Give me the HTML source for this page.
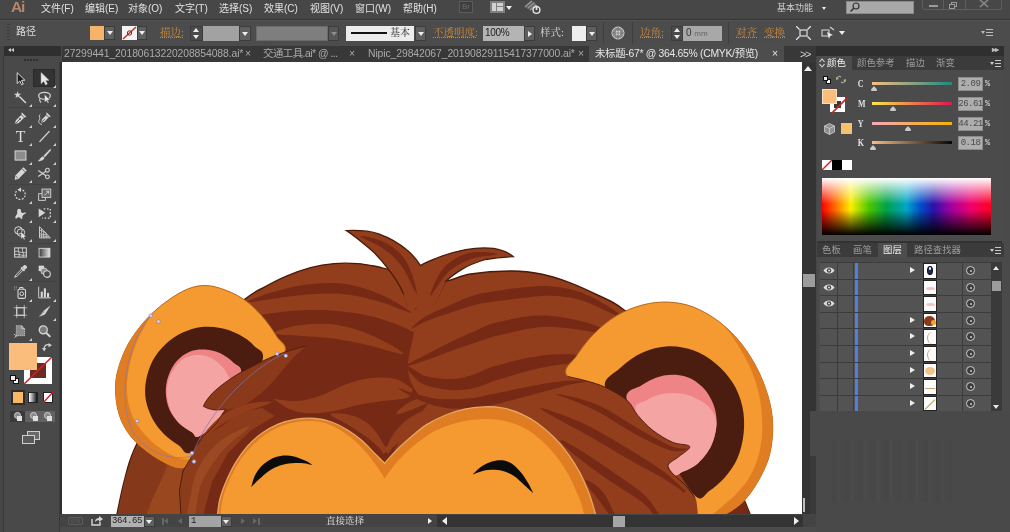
<!DOCTYPE html>
<html lang="zh-CN">
<head>
<meta charset="utf-8">
<title>Adobe Illustrator</title>
<style>
*{box-sizing:border-box;margin:0;padding:0}
html,body{width:1010px;height:532px;overflow:hidden;background:#464646}
body{font-family:"Liberation Sans","Noto Sans CJK SC",sans-serif;font-size:11px;color:#d8d8d8;position:relative}
.abs{position:absolute}
#app{will-change:transform;position:absolute;left:0;top:0;width:1010px;height:532px;overflow:hidden;background:#464646}
/* menu bar */
#menubar{left:0;top:0;width:1010px;height:20px;background:#474747;border-bottom:1px solid #333}
#menubar .mi{position:absolute;top:0;height:18px;line-height:17px;font-size:10px;color:#e2e2e2;white-space:nowrap;letter-spacing:0}
#ai{position:absolute;left:11px;top:-2px;font-size:15.5px;line-height:18px;color:#b8866a;font-weight:700;letter-spacing:-1.2px}
/* control bar */
#ctrl{left:0;top:20px;width:1010px;height:26px;background:#4c4c4c;box-shadow:inset 0 1px 0 #555}
#ctrl .t{position:absolute;white-space:nowrap;font-size:10.5px;line-height:14px;color:#dcdcdc}
#ctrl .o{color:#d08b35;text-decoration:underline;text-decoration-style:dotted;text-underline-offset:1px}
.dd{position:absolute;background:#5f5f5f;border:1px solid #3c3c3c}
.tri-d{position:absolute;width:0;height:0;border-left:3px solid transparent;border-right:3px solid transparent;border-top:4px solid #eee}
.tri-u{position:absolute;width:0;height:0;border-left:3px solid transparent;border-right:3px solid transparent;border-bottom:4px solid #eee}
.tri-r{position:absolute;width:0;height:0;border-top:3px solid transparent;border-bottom:3px solid transparent;border-left:4px solid #eee}
.tri-l{position:absolute;width:0;height:0;border-top:3px solid transparent;border-bottom:3px solid transparent;border-right:4px solid #eee}
/* tab bar */
#tabs{left:60px;top:46px;width:756px;height:16px;background:#383838}
#tabs .tab{position:absolute;top:0;height:16px;line-height:16px;font-size:10.4px;color:#aaaaaa;white-space:nowrap;letter-spacing:-0.1px}
#tabs .act{background:#4d4d4d;color:#e6e6e6}
/* canvas */
#canvas{left:62px;top:62px;width:740px;height:452px;background:#fff;overflow:hidden}
/* toolbox */
#tool{left:0;top:46px;width:62px;height:486px;background:#494949}
/* right */
#right{left:803px;top:46px;width:207px;height:486px;background:#464646}
.pt{font-size:9.4px;line-height:14px;color:#9c9c9c;white-space:nowrap}
/* status */
#status{left:60px;top:514px;width:756px;height:18px;background:#444}
</style>
</head>
<body>
<div id="app">

<!-- MENUBAR -->
<div id="menubar" class="abs">
  <div id="ai">Ai</div>
  <div class="mi" style="left:41px">文件(F)</div>
  <div class="mi" style="left:85px">编辑(E)</div>
  <div class="mi" style="left:128px">对象(O)</div>
  <div class="mi" style="left:175px">文字(T)</div>
  <div class="mi" style="left:219px">选择(S)</div>
  <div class="mi" style="left:264px">效果(C)</div>
  <div class="mi" style="left:310px">视图(V)</div>
  <div class="mi" style="left:355px">窗口(W)</div>
  <div class="mi" style="left:403px">帮助(H)</div>
  <div class="mi" style="left:777px;font-size:9px;color:#d0d0d0">基本功能</div>
  <div class="abs" style="left:459px;top:1px;width:14px;height:12px;border:1px solid #5c5c5c;background:#3e3e3e;color:#6e6e6e;font-size:8px;line-height:10px;text-align:center">Br</div>
  <div class="abs" style="left:490px;top:1px;width:15px;height:12px;background:#808080">
    <div class="abs" style="left:2px;top:2px;width:4px;height:8px;background:#d2d2d2"></div>
    <div class="abs" style="left:7px;top:2px;width:6px;height:3px;background:#d2d2d2"></div>
    <div class="abs" style="left:7px;top:6px;width:6px;height:4px;background:#d2d2d2"></div>
  </div>
  <div class="tri-d" style="left:506px;top:6px"></div>
  <svg class="abs" style="left:523px;top:0" width="20" height="16" viewBox="0 0 20 16"><path d="M2 7 L9 1 M4.5 8.5 L11.5 2.5 M7 10 L13 4.5" stroke="#8e8e8e" stroke-width="1.8"/><circle cx="13.5" cy="10" r="3.4" fill="none" stroke="#e6e6e6" stroke-width="1.4"/><path d="M13.5 5.5 V10" stroke="#e6e6e6" stroke-width="1.6"/></svg>
  <div class="tri-d" style="left:822px;top:7px;border-left-width:2.5px;border-right-width:2.5px;border-top-width:3px"></div>
  <div class="abs" style="left:846px;top:1px;width:68px;height:13px;background:#a9a9a9;border:1px solid #8a8a8a"></div>
  <svg class="abs" style="left:848px;top:1px" width="14" height="13" viewBox="0 0 14 13"><circle cx="8" cy="5" r="3" fill="none" stroke="#333" stroke-width="1.2"/><path d="M5.8 7.2 L2.5 10.5" stroke="#333" stroke-width="1.5"/></svg>
  <div class="abs" style="left:922px;top:0;width:80px;height:10px;border:1px solid #5e5e5e;border-top:none;border-radius:0 0 3px 3px"></div>
  <div class="abs" style="left:943px;top:0;width:1px;height:10px;background:#5e5e5e"></div>
  <div class="abs" style="left:965px;top:0;width:1px;height:10px;background:#5e5e5e"></div>
  <div class="abs" style="left:929px;top:5px;width:9px;height:2px;background:#9a9a9a"></div>
  <div class="abs" style="left:951px;top:2px;width:6px;height:5px;border:1px solid #9a9a9a"></div>
  <div class="abs" style="left:949px;top:4px;width:6px;height:5px;border:1px solid #9a9a9a;background:#474747"></div>
  <svg class="abs" style="left:978px;top:0" width="12" height="9" viewBox="0 0 12 9"><path d="M2 0 L10 7 M10 0 L2 7" stroke="#8a8a8a" stroke-width="1.6"/></svg>
</div>

<!-- CONTROL BAR -->
<div id="ctrl" class="abs">
  <div class="abs" style="left:7px;top:4px;width:3px;height:18px;background:repeating-linear-gradient(#3a3a3a 0 1px,transparent 1px 3px)"></div>
  <div class="t" style="left:16px;top:5px;font-size:10px">路径</div>
  <div class="abs" style="left:90px;top:6px;width:14px;height:14px;background:#f8b36b"></div>
  <div class="dd" style="left:104px;top:6px;width:11px;height:14px"></div><div class="tri-d" style="left:107px;top:11px"></div>
  <div class="abs" style="left:122px;top:6px;width:15px;height:14px;background:#f4f4f4"></div>
  <svg class="abs" style="left:122px;top:6px" width="15" height="14" viewBox="0 0 15 14"><path d="M1 13 L14 1" stroke="#c8332b" stroke-width="1.6"/><circle cx="7.5" cy="7" r="2.2" fill="none" stroke="#7a2a20" stroke-width="1"/></svg>
  <div class="dd" style="left:137px;top:6px;width:10px;height:14px"></div><div class="tri-d" style="left:139px;top:11px"></div>
  <div class="t o" style="left:160px;top:6px;font-family:'Liberation Serif','Noto Serif CJK SC',serif;font-size:10.5px">描边:</div>
  <div class="dd" style="left:190px;top:6px;width:13px;height:15px;background:#4a4a4a"></div>
  <div class="tri-u" style="left:193px;top:8px"></div><div class="tri-d" style="left:193px;top:15px"></div>
  <div class="abs" style="left:203px;top:6px;width:36px;height:15px;background:#a2a2a2"></div>
  <div class="dd" style="left:239px;top:6px;width:12px;height:15px"></div><div class="tri-d" style="left:242px;top:12px"></div>
  <div class="abs" style="left:256px;top:6px;width:72px;height:15px;background:#7e7e7e;border:1px solid #6a6a6a"></div>
  <div class="dd" style="left:328px;top:6px;width:11px;height:15px;background:#565656"></div><div class="tri-d" style="left:331px;top:12px;border-top-color:#8c8c8c"></div>
  <div class="abs" style="left:346px;top:6px;width:68px;height:15px;background:#ececec"></div>
  <div class="abs" style="left:351px;top:12px;width:36px;height:2px;background:#111"></div>
  <div class="t" style="left:390px;top:6px;color:#222;font-family:'Liberation Serif','Noto Serif CJK SC',serif;font-size:10px">基本</div>
  <div class="dd" style="left:415px;top:6px;width:11px;height:15px"></div><div class="tri-d" style="left:418px;top:12px"></div>
  <div class="t o" style="left:433px;top:6px;font-family:'Liberation Serif','Noto Serif CJK SC',serif;font-size:10.5px">不透明度:</div>
  <div class="abs" style="left:483px;top:6px;width:41px;height:15px;background:#b4b4b4"></div>
  <div class="t" style="left:485px;top:6px;color:#222;font-size:10px;letter-spacing:-0.3px">100%</div>
  <div class="dd" style="left:524px;top:6px;width:11px;height:15px"></div><div class="tri-r" style="left:528px;top:11px"></div>
  <div class="t" style="left:540px;top:6px;font-family:'Liberation Serif','Noto Serif CJK SC',serif;font-size:10.5px">样式:</div>
  <div class="abs" style="left:572px;top:6px;width:14px;height:15px;background:#eeeeee"></div>
  <div class="dd" style="left:586px;top:6px;width:11px;height:15px"></div><div class="tri-d" style="left:589px;top:12px"></div>
  <div class="abs" style="left:603px;top:2px;width:1px;height:22px;background:#3e3e3e"></div>
  <svg class="abs" style="left:611px;top:6px" width="14" height="14" viewBox="0 0 14 14"><circle cx="7" cy="7" r="6" fill="#8a8a8a" stroke="#d8d8d8" stroke-width="1"/><circle cx="7" cy="7" r="2.4" fill="#dcdcdc"/><path d="M1 7 H13 M7 1 V13" stroke="#666" stroke-width=".7"/></svg>
  <div class="abs" style="left:632px;top:2px;width:1px;height:22px;background:#3e3e3e"></div>
  <div class="t o" style="left:640px;top:6px;font-family:'Liberation Serif','Noto Serif CJK SC',serif;font-size:10.5px">边角:</div>
  <div class="dd" style="left:671px;top:6px;width:12px;height:15px;background:#4a4a4a"></div>
  <div class="tri-u" style="left:674px;top:8px"></div><div class="tri-d" style="left:674px;top:15px"></div>
  <div class="abs" style="left:683px;top:6px;width:39px;height:15px;background:#a8a8a8"></div>
  <div class="t" style="left:686px;top:6px;color:#333;font-size:10px">0 <span style="font-size:8px;color:#666">mm</span></div>
  <div class="abs" style="left:728px;top:2px;width:1px;height:22px;background:#3e3e3e"></div>
  <div class="t o" style="left:736px;top:6px;font-family:'Liberation Serif','Noto Serif CJK SC',serif;font-size:10.5px">对齐</div>
  <div class="t o" style="left:764px;top:6px;font-family:'Liberation Serif','Noto Serif CJK SC',serif;font-size:10.5px">变换</div>
  <svg class="abs" style="left:796px;top:6px" width="15" height="14" viewBox="0 0 15 14"><rect x="4" y="4" width="7" height="6" fill="none" stroke="#e0e0e0" stroke-width="1.2"/><path d="M0 0 L3.5 3.5 M15 0 L11.5 3.5 M0 14 L3.5 10.5 M15 14 L11.5 10.5" stroke="#e0e0e0" stroke-width="1.3"/></svg>
  <svg class="abs" style="left:819px;top:6px" width="16" height="14" viewBox="0 0 16 14"><rect x="3" y="4" width="7" height="6" fill="none" stroke="#d0d0d0" stroke-width="1.1"/><path d="M8 6 L14 9 L11 10 L10 13 Z" fill="#e8e8e8"/><path d="M11 1 L15 4" stroke="#d0d0d0" stroke-width="1.2"/></svg>
  <div class="tri-d" style="left:839px;top:11px"></div>
  <div class="tri-d" style="left:981px;top:11px;border-left-width:2px;border-right-width:2px;border-top-width:3px;border-top-color:#bbb"></div>
  <div class="abs" style="left:986px;top:9px;width:7px;height:7px;background:repeating-linear-gradient(#bdbdbd 0 1px,transparent 1px 3px)"></div>
</div>

<!-- TAB BAR -->
<div id="tabs" class="abs">
  <div class="tab" style="left:4px">27299441_20180613220208854088.ai*</div><div class="tab x" style="left:185px">×</div>
  <div class="tab" style="left:203px;letter-spacing:-0.5px">交通工具.ai* @ ...</div><div class="tab x" style="left:289px">×</div>
  <div class="tab" style="left:308px">Nipic_29842067_20190829115417377000.ai*</div><div class="tab x" style="left:518px">×</div>
  <div class="tab act" style="left:529px;width:195px"><span style="position:absolute;left:6px;letter-spacing:-0.3px">未标题-67* @ 364.65% (CMYK/预览)</span><span style="position:absolute;left:183px">×</span></div>
  <div class="tab" style="left:741px;color:#cfcfcf;font-size:11px;letter-spacing:-1.5px;top:0px">&gt;&gt;</div>
</div>

<!-- CANVAS -->
<div id="canvas" class="abs">
<!--LION-->
<svg class="abs" style="left:0;top:0" width="740" height="452" viewBox="62 62 740 452">
<defs>
<clipPath id="cle"><path d="M284.2 353.3 C288.6 344.4 280.4 342.7 276.7 336.4 C272.9 330.1 267.3 322 261.7 315.7 C256.1 309.4 249.8 303.4 242.9 298.8 C236 294.2 227.2 290.5 220.3 288.3 C213.4 286.1 207.8 285.1 201.5 285.6 C195.2 286.1 189.6 287.9 182.7 291.3 C175.8 294.8 167.1 300.7 160.2 306.3 C153.3 311.9 147.1 318.1 141.4 325 C135.8 331.9 130.4 339.5 126.3 347.7 C122.2 355.9 118.7 365.9 116.9 374 C115.2 382.1 115.2 389 115.8 396.5 C116.4 404 118 412.1 120.7 419 C123.4 425.9 127.3 432.2 132 437.9 C136.7 443.5 143 448.5 148.9 452.9 C154.8 457.3 162.4 461.7 167.7 464.2 C173 466.7 176.4 468.3 180.8 468 C185.2 467.7 188.3 468.6 194 462.3 C199.7 456 205.7 442.1 215 430 C224.3 417.9 238.5 402.8 250 390 C261.5 377.2 279.8 362.2 284.2 353.3 Z"/></clipPath>
<clipPath id="cre"><path d="M567.8 376.5 C560.7 369 572.8 362.1 577.3 354.9 C581.8 347.7 588.1 339.7 594.6 333.2 C601.1 326.7 608.3 320.6 616.2 315.9 C624.1 311.2 633.5 307.4 642.1 305.1 C650.8 302.8 659.5 301.7 668.1 302.1 C676.8 302.5 685.4 303.9 694 307.3 C702.6 310.7 712.1 316.3 720 322.4 C727.9 328.5 735.1 335.7 741.6 344 C748.1 352.3 754.2 362.4 758.9 372.1 C763.6 381.8 767.4 393 769.7 402.4 C772 411.8 772.7 419.6 772.7 428.3 C772.7 437 771.7 446.4 769.7 454.3 C767.8 462.2 764.5 469.1 761 475.9 C757.5 482.7 753 489.8 749 495 C745 500.2 741.5 503.5 737 507 C732.5 510.5 727.2 513.5 722 516 C716.8 518.5 710.3 522 706 522 C701.7 522 698 520.3 696 516 C694 511.7 698.3 507 694 496 C689.7 485 682.3 466 670 450 C657.7 434 637 412.2 620 400 C603 387.8 574.9 384 567.8 376.5 Z"/></clipPath>
</defs>
<path d="M117 514 C118.2 508.7 121.2 492.7 124 482 C126.8 471.3 128 463.7 134 450 C140 436.3 149 418.3 160 400 C171 381.7 185.9 356.8 200 340 C214.1 323.2 234.1 308.1 244.7 299.4 C255.3 290.7 256.4 291.5 263.5 287.6 C270.6 283.7 279.2 279.2 287 275.9 C294.8 272.6 302.7 269.7 310.5 267.6 C318.3 265.6 326.2 264.3 334 263.6 C341.8 262.9 350.4 263.1 357.5 263.6 C364.6 264.1 370.8 265.4 376.3 266.5 C381.8 267.6 382.6 268.4 390.4 270 C398.2 271.6 413.9 274.2 423 276 C432.1 277.8 437.1 281.3 445 281 C452.9 280.7 459.2 275.7 470.5 274 C481.8 272.3 501 271 512.8 271 C524.5 271 531.6 272.1 541 274 C550.4 275.9 559.6 278.9 569 282.4 C578.4 285.9 588.4 290.6 597.4 295 C606.4 299.4 612.4 300.7 622.8 309 C633.2 317.3 647.1 326.5 660 345 C672.9 363.5 687.5 397.5 700 420 C712.5 442.5 726.7 464.3 735 480 C743.3 495.7 747.5 508.3 750 514 L750 520 L117 520 Z" fill="#923d1c" stroke="#4a1b0b" stroke-width="1.4"/>
<clipPath id="cbm"><path d="M117 514 C118.2 508.7 121.2 492.7 124 482 C126.8 471.3 128 463.7 134 450 C140 436.3 149 418.3 160 400 C171 381.7 185.9 356.8 200 340 C214.1 323.2 234.1 308.1 244.7 299.4 C255.3 290.7 256.4 291.5 263.5 287.6 C270.6 283.7 279.2 279.2 287 275.9 C294.8 272.6 302.7 269.7 310.5 267.6 C318.3 265.6 326.2 264.3 334 263.6 C341.8 262.9 350.4 263.1 357.5 263.6 C364.6 264.1 370.8 265.4 376.3 266.5 C381.8 267.6 382.6 268.4 390.4 270 C398.2 271.6 413.9 274.2 423 276 C432.1 277.8 437.1 281.3 445 281 C452.9 280.7 459.2 275.7 470.5 274 C481.8 272.3 501 271 512.8 271 C524.5 271 531.6 272.1 541 274 C550.4 275.9 559.6 278.9 569 282.4 C578.4 285.9 588.4 290.6 597.4 295 C606.4 299.4 612.4 300.7 622.8 309 C633.2 317.3 647.1 326.5 660 345 C672.9 363.5 687.5 397.5 700 420 C712.5 442.5 726.7 464.3 735 480 C743.3 495.7 747.5 508.3 750 514 L750 520 L117 520 Z"/></clipPath>
<g clip-path="url(#cbm)">
<path d="M117 516 L124 482 L134 450 L150 440 L166 462 L164 474 L152 500 L146 516 Z" fill="#85391a"/>
<path d="M146 516 L152 500 L164 474 L170 462 L192 452 L184 470 L180 490 L182 516 Z" fill="#98471f"/>
<path d="M240 322 C243.9 320.8 251.8 316.6 263.5 314.6 C275.2 312.6 294.8 310.2 310.5 310 C326.2 309.8 343.8 311.4 357.5 313.5 C371.2 315.6 383.4 319.8 392.8 322.9 C402.2 326 410.5 330.7 414 332.3 C412 345 407 358 408 370 C409 382 416 394 428 404 L400 440 L384 470 L230 470 L200 514 L182 514 L180 490 L183 470 L194 450 L230 360 Z" fill="#762914"/>
<path d="M700 495 L752 495 L752 520 L700 520 Z" fill="#762914"/>
<path d="M247.1 302.5 L249.3 302.1 L252.2 301.9 L255.7 301.4 L259.5 300.8 L263.5 300.2 L267.7 299.5 L271.9 298.9 L276 298.4 L280.1 297.8 L284.4 297.2 L288.8 296.6 L293.2 296 L297.7 295.5 L302.2 295 L306.6 294.5 L310.9 294.2 L315.3 294 L319.6 293.8 L323.9 293.6 L328.2 293.5 L332.5 293.5 L336.7 293.6 L340.9 293.8 L345.1 294.2 L349.4 294.7 L353.7 295.4 L358.1 296.3 L362.5 297.2 L366.9 298.3 L371.3 299.4 L375.6 300.5 L379.8 301.7 L384.1 303.1 L388.6 304.6 L393.3 306.4 L397.8 308.2 L402.1 309.9 L406 311.3 L409.3 312.5 L412 313 L412 313 L409.9 311.2 L407.1 309.2 L403.6 306.9 L399.6 304.5 L395.3 302 L390.9 299.6 L386.5 297.3 L382.2 295.3 L378 293.5 L373.7 291.8 L369.3 290.2 L364.8 288.7 L360.3 287.3 L355.7 286.1 L351.1 285 L346.5 284.2 L341.8 283.6 L337.2 283.2 L332.7 283 L328.1 283 L323.5 283.1 L319 283.4 L314.5 283.7 L310.1 284.2 L305.5 284.7 L300.9 285.5 L296.3 286.3 L291.7 287.3 L287.2 288.3 L282.8 289.4 L278.6 290.5 L274.6 291.6 L270.6 292.8 L266.4 294.1 L262.3 295.5 L258.4 296.9 L254.8 298.2 L251.6 299.6 L249 300.8 L246.9 301.5 Z" fill="#762914"/>
<path d="M274 333 L276.1 333.9 L278.7 334.3 L281.8 334.7 L285.2 334.9 L288.9 335.1 L292.7 335.3 L296.5 335.5 L300.2 335.8 L304 336.1 L308 336.4 L312.1 336.6 L316.3 336.9 L320.6 337.2 L324.8 337.5 L329 337.9 L333.1 338.4 L337.2 339 L341.3 339.7 L345.6 340.5 L349.9 341.3 L354.2 342.2 L358.5 343.1 L362.9 344.1 L367.3 345 L372 346.2 L377 347.5 L382.2 349 L387.4 350.5 L392.4 351.9 L397 353.1 L400.9 353.9 L404 354 L404 354 L401.7 351.9 L398.5 349.6 L394.5 347.1 L389.9 344.5 L385.1 341.9 L380.1 339.4 L375.3 337 L370.7 335 L366.3 333.2 L361.9 331.5 L357.5 330 L353 328.6 L348.5 327.3 L344 326.2 L339.5 325.3 L334.9 324.6 L330.3 324.1 L325.7 323.8 L321.1 323.7 L316.5 323.7 L312.1 324 L307.8 324.3 L303.7 324.7 L299.8 325.2 L295.9 325.8 L292 326.6 L288.1 327.5 L284.5 328.5 L281.2 329.5 L278.2 330.6 L275.8 331.7 L274 333 Z" fill="#923d1c"/>
<path d="M411 329 L412.3 328.6 L413.9 327.8 L415.6 326.8 L417.6 325.6 L419.7 324.4 L422 323.1 L424.5 321.9 L427 320.8 L429.8 319.7 L433 318.5 L436.4 317.3 L439.9 316.1 L443.6 314.9 L447.2 313.7 L450.7 312.5 L453.9 311.4 L457 310.4 L459.9 309.4 L462.7 308.5 L465.4 307.6 L468.1 306.7 L470.7 305.9 L473.4 305.2 L476.2 304.5 L479.1 303.9 L482 303.3 L485.1 302.8 L488.2 302.4 L491.3 301.9 L494.5 301.5 L497.6 301.1 L500.8 300.6 L503.9 300.2 L507 299.8 L510 299.4 L513.1 299 L516.2 298.7 L519.3 298.3 L522.4 298 L525.5 297.7 L528.6 297.3 L531.7 296.9 L534.7 296.6 L537.6 296.2 L540.5 295.9 L543.5 295.7 L546.6 295.6 L549.7 295.7 L553.1 295.8 L556.7 296 L560.3 296.3 L564 296.7 L567.7 297.2 L571.4 297.8 L575.1 298.6 L578.8 299.5 L582.7 300.7 L586.9 302.3 L591.3 304.1 L595.6 306 L599.9 308 L603.8 309.8 L607.4 311.5 L610.4 312.9 L612.8 314.1 L614.8 315.1 L616.5 316.1 L617.9 316.9 L619 317.6 L620.1 318.3 L621 318.7 L622 319 L622 319 L621.6 318.1 L621.1 317.2 L620.5 316.1 L619.6 315 L618.4 313.7 L616.9 312.2 L614.9 310.7 L612.6 309.1 L609.7 307.3 L606.3 305.2 L602.5 302.9 L598.3 300.6 L594 298.3 L589.6 296.1 L585.3 294.2 L581.2 292.5 L577.2 291.2 L573.2 290 L569.2 289.1 L565.2 288.3 L561.3 287.6 L557.5 287.1 L553.9 286.7 L550.3 286.3 L546.7 286.1 L543.3 286 L540 286.1 L536.8 286.3 L533.6 286.5 L530.6 286.8 L527.6 287.1 L524.5 287.3 L521.4 287.6 L518.2 287.9 L515 288.2 L511.9 288.6 L508.7 289 L505.5 289.4 L502.4 289.9 L499.2 290.4 L496.1 290.9 L492.9 291.4 L489.7 291.9 L486.5 292.5 L483.3 293.1 L480.1 293.8 L476.9 294.6 L473.8 295.5 L470.8 296.4 L467.9 297.4 L465.1 298.5 L462.4 299.6 L459.7 300.8 L457 302 L454.2 303.3 L451.3 304.6 L448.1 305.9 L444.8 307.4 L441.3 308.9 L437.7 310.5 L434.2 312.1 L430.9 313.7 L427.8 315.2 L425 316.8 L422.5 318.4 L420.1 320.1 L418 321.8 L416.1 323.5 L414.4 325.1 L413 326.6 L411.8 327.9 L411 329 Z" fill="#762914"/>
<path d="M403 367 L404.9 366.7 L407.4 366.2 L410.2 365.4 L413.4 364.4 L416.8 363.3 L420.2 362.2 L423.7 361.1 L427 359.9 L430.3 358.8 L433.7 357.5 L437.2 356.2 L440.8 354.8 L444.3 353.5 L447.7 352.1 L451.1 350.9 L454.2 349.7 L457.3 348.6 L460.4 347.6 L463.4 346.6 L466.3 345.6 L469.1 344.7 L471.9 343.8 L474.5 342.9 L477 342.1 L479.4 341.3 L481.6 340.5 L483.6 339.8 L485.5 339.1 L487.3 338.4 L489 337.9 L490.6 337.4 L492 336.9 L493.3 336.5 L494.3 336.3 L495 336.1 L495.8 336 L496.7 335.8 L497.9 335.6 L499.5 335.3 L501.5 334.8 L503.9 334.2 L506.7 333.5 L509.8 332.8 L513 332 L516.4 331.2 L519.7 330.4 L522.9 329.7 L525.9 329.2 L528.9 328.7 L531.8 328.2 L534.7 327.8 L537.5 327.4 L540.3 327.1 L543.3 326.9 L546.4 326.8 L549.7 326.8 L553.4 326.9 L557.4 327.2 L561.6 327.5 L565.9 328 L570.2 328.5 L574.5 329 L578.5 329.6 L582.1 330.2 L585.4 330.7 L588.5 331.2 L591.3 331.8 L594 332.3 L596.7 333 L599.4 333.7 L602.1 334.5 L605 335.3 L608.2 336.4 L611.6 337.8 L615.2 339.2 L618.8 340.7 L622.2 342.2 L625.3 343.5 L627.9 344.5 L630 345 L630 345 L628.4 343.6 L626.1 342 L623.3 340.1 L620.1 338.1 L616.8 336.1 L613.4 334.1 L610.1 332.3 L607 330.7 L604.1 329.3 L601.4 328 L598.8 326.8 L596.1 325.7 L593.3 324.7 L590.4 323.7 L587.3 322.8 L583.9 321.8 L580.1 320.9 L576.1 320 L571.8 319.1 L567.3 318.2 L562.9 317.5 L558.5 316.8 L554.3 316.2 L550.3 315.8 L546.6 315.6 L543.1 315.5 L539.7 315.5 L536.5 315.6 L533.4 315.8 L530.3 316.1 L527.2 316.4 L524.1 316.8 L520.7 317.3 L517.1 318 L513.6 318.7 L510.1 319.4 L506.8 320.2 L503.7 320.9 L500.9 321.6 L498.5 322.2 L496.7 322.6 L495.2 322.9 L494 323.2 L493 323.4 L491.9 323.7 L490.7 324.1 L489.5 324.5 L488 325.1 L486.3 325.8 L484.6 326.5 L482.8 327.3 L481 328.1 L479.2 329 L477.2 329.9 L475.2 330.9 L473 331.9 L470.6 333 L468.1 334.1 L465.5 335.2 L462.8 336.4 L459.9 337.7 L457 339 L454 340.4 L451 341.9 L447.8 343.4 L444.6 345.1 L441.3 346.8 L437.9 348.5 L434.6 350.3 L431.3 352 L428.1 353.7 L425 355.3 L421.9 356.8 L418.7 358.5 L415.4 360.1 L412.3 361.7 L409.3 363.2 L406.7 364.6 L404.6 365.8 L403 367 Z" fill="#762914"/>
<path d="M404 364 L404.3 365 L404.9 366 L405.7 367.2 L406.7 368.5 L407.8 369.9 L408.9 371.3 L410.2 372.7 L411.4 374 L412.6 375.2 L413.7 376.5 L414.9 377.9 L416.3 379.3 L417.9 380.7 L419.8 382.2 L422.1 383.5 L424.7 384.7 L427.6 385.7 L430.8 386.6 L434.3 387.5 L438 388.3 L441.7 389 L445.4 389.5 L449.1 389.9 L452.6 390.2 L455.9 390.3 L459.3 390.1 L462.5 389.8 L465.6 389.4 L468.6 388.9 L471.5 388.4 L474.1 387.8 L476.7 387.3 L479.3 386.6 L481.7 385.8 L484 385 L486.1 384.1 L487.9 383.3 L489.6 382.6 L491.1 382 L492.4 381.5 L493.7 381.1 L494.7 380.8 L495.5 380.5 L496.3 380.3 L497.2 380 L498.4 379.7 L499.9 379.3 L501.9 378.7 L504.4 377.9 L507.1 377.1 L510.2 376.1 L513.4 375.1 L516.8 374.1 L520.1 373.1 L523.4 372.2 L526.5 371.3 L529.5 370.5 L532.6 369.8 L535.6 369 L538.6 368.3 L541.6 367.7 L544.7 367.1 L547.7 366.5 L550.7 366 L553.7 365.5 L556.8 365 L559.9 364.6 L563.1 364.2 L566.1 363.9 L569.1 363.6 L572 363.4 L574.9 363.3 L577.6 363.2 L580.1 363.2 L582.4 363.2 L584.8 363.2 L587.2 363.4 L589.7 363.6 L592.4 364 L595.3 364.5 L598.8 365.2 L602.7 366.2 L607 367.3 L611.3 368.6 L615.5 369.8 L619.3 370.8 L622.5 371.6 L625 372 L625 372 L622.9 370.7 L619.9 369.2 L616.3 367.6 L612.3 365.8 L608.1 364 L604 362.3 L600.1 360.8 L596.7 359.5 L593.7 358.6 L590.9 357.7 L588.3 357 L585.7 356.4 L583.2 355.8 L580.6 355.4 L578 355 L575.1 354.7 L572.1 354.5 L568.9 354.3 L565.7 354.2 L562.4 354.2 L559.2 354.3 L555.9 354.4 L552.6 354.6 L549.3 354.8 L546.1 355.1 L542.8 355.5 L539.6 355.9 L536.4 356.4 L533.2 356.9 L529.9 357.4 L526.7 358 L523.5 358.7 L520.2 359.4 L516.7 360.3 L513.1 361.2 L509.7 362.1 L506.3 363 L503.2 363.9 L500.5 364.7 L498.1 365.3 L496.2 365.8 L494.7 366.2 L493.5 366.5 L492.5 366.8 L491.4 367.1 L490.3 367.5 L489.1 367.9 L487.6 368.5 L485.8 369.2 L483.9 370.1 L482.2 370.9 L480.5 371.8 L478.8 372.6 L477 373.4 L475.3 374.1 L473.3 374.7 L471 375.4 L468.6 376.1 L466 376.8 L463.4 377.4 L460.8 378 L458.1 378.5 L455.4 378.8 L452.6 379 L449.7 379 L446.4 379 L443 378.7 L439.5 378.4 L436 378 L432.8 377.6 L429.8 377 L427.3 376.5 L425.3 376 L423.6 375.4 L422 374.6 L420.5 373.8 L419.1 372.9 L417.6 371.9 L416.1 370.9 L414.6 370 L413.1 369.1 L411.6 368.2 L410.1 367.3 L408.7 366.4 L407.3 365.5 L406.1 364.8 L405 364.3 L404 364 Z" fill="#762914"/>
<path d="M398 388 L399.1 389 L400.7 390.1 L402.6 391.3 L404.7 392.7 L407 394.1 L409.5 395.4 L411.9 396.7 L414.3 397.9 L416.6 399 L419.1 400 L421.6 401.1 L424.2 402 L426.7 403 L429.3 403.8 L431.8 404.6 L434.3 405.4 L436.6 406 L438.8 406.5 L441 407 L443.2 407.4 L445.4 407.7 L447.7 408 L450 408.2 L452.5 408.4 L455.2 408.6 L458.1 408.6 L461.1 408.6 L464.2 408.6 L467.2 408.5 L470.2 408.4 L473 408.2 L475.6 408 L478 407.8 L480.3 407.4 L482.4 407 L484.4 406.6 L486.3 406.2 L488 405.8 L489.6 405.5 L491.1 405.1 L492.4 404.9 L493.4 404.7 L494.4 404.5 L495.3 404.3 L496.4 404.1 L497.6 403.8 L499.2 403.4 L501.1 402.9 L503.6 402.3 L506.4 401.6 L509.4 400.7 L512.7 399.9 L516.1 399 L519.5 398.1 L522.8 397.2 L526 396.3 L529.1 395.5 L532.3 394.7 L535.5 393.8 L538.7 393 L541.8 392.2 L544.9 391.4 L547.9 390.6 L550.7 389.9 L553.5 389.1 L556.1 388.4 L558.7 387.7 L561.1 387 L563.5 386.3 L565.8 385.6 L568.1 385.1 L570.3 384.5 L572.5 384.1 L574.8 383.7 L577.1 383.3 L579.3 382.9 L581.4 382.6 L583.2 382.3 L584.8 382 L586 381.5 L586 381.5 L584.8 381.2 L583.2 380.9 L581.3 380.7 L579.2 380.6 L576.9 380.4 L574.5 380.4 L572.1 380.4 L569.7 380.5 L567.4 380.6 L565 380.9 L562.5 381.1 L560 381.5 L557.4 381.9 L554.8 382.3 L552.1 382.7 L549.3 383.1 L546.4 383.6 L543.3 384.1 L540.2 384.7 L537 385.2 L533.7 385.8 L530.4 386.4 L527.2 387.1 L524 387.7 L520.7 388.3 L517.3 389.1 L513.9 389.8 L510.4 390.6 L507.1 391.3 L504 392 L501.3 392.6 L498.9 393.1 L497 393.5 L495.5 393.7 L494.4 393.9 L493.4 394.1 L492.5 394.2 L491.6 394.4 L490.4 394.6 L488.9 394.9 L487.3 395.2 L485.6 395.6 L483.9 396.1 L482.1 396.5 L480.3 396.9 L478.5 397.3 L476.5 397.7 L474.4 398 L472.1 398.3 L469.4 398.5 L466.6 398.8 L463.7 399 L460.8 399.2 L458 399.4 L455.2 399.5 L452.7 399.6 L450.4 399.6 L448.2 399.6 L446.1 399.6 L444.1 399.5 L442.1 399.4 L440.1 399.2 L438 398.9 L435.7 398.6 L433.4 398.3 L430.9 397.8 L428.3 397.3 L425.8 396.7 L423.2 396.1 L420.6 395.4 L418.1 394.8 L415.7 394.1 L413.3 393.3 L410.8 392.5 L408.3 391.5 L405.8 390.6 L403.4 389.7 L401.3 388.9 L399.5 388.3 L398 388 Z" fill="#762914"/>
<path d="M424.5 283.8 L424.1 284.7 L423.2 285.8 L422.4 287.1 L421.6 288.5 L420.8 290.1 L420 291.8 L419.3 293.5 L418.7 295.1 L418 296.8 L417.3 298.8 L416.7 300.9 L416 303 L415.5 305.1 L415.1 307 L414.9 308.6 L415 310 L415 310 L416.1 309.2 L417.2 307.9 L418.3 306.3 L419.5 304.5 L420.6 302.6 L421.7 300.6 L422.6 298.7 L423.3 296.9 L423.9 295.2 L424.5 293.3 L424.9 291.5 L425.2 289.7 L425.4 288 L425.4 286.5 L425.3 285.1 L425.5 284.2 Z" fill="#762914"/>
</g>
<path d="M346.5 230.6 C360 230 370 231 378.6 233.8 C390 238 399 243 406.3 249.6 C412 254 417 260 420.5 265.6 C426 262 432 260 438 257.5 C447 254 456 251.5 465.7 249.6 C475 248 484 247.5 493.5 248.4 C501 249.5 508 252 513.3 256.7 C503 257 494 258 485.5 259.5 C477 262 469 265 461.8 269.4 C456 273 450 277 446 281.3 L433 306 L408 306 C404 292 397 280 388.5 269.4 C383 262 377 255 370.7 249.6 C363 243 355 236 346.5 230.6 Z" fill="#923d1c" stroke="#4a1b0b" stroke-width="1.3"/>
<path d="M408 308 L403 294 L446 282 L433 308 Z" fill="#923d1c"/>
<path d="M360 236 L361.7 237.4 L364.3 238.7 L367.3 240.2 L370.6 241.8 L374.1 243.4 L377.5 245.1 L380.7 246.9 L383.4 248.7 L385.8 250.5 L388.3 252.4 L390.6 254.3 L392.9 256.3 L395.1 258.4 L397.2 260.7 L399.3 263.1 L401.4 265.7 L403.4 268.8 L405.6 272.5 L407.7 276.6 L409.8 280.9 L411.8 285 L413.7 288.7 L415.4 291.9 L417 294 L417 294 L416.7 291.4 L415.9 287.9 L414.9 283.8 L413.6 279.4 L412.1 274.8 L410.4 270.2 L408.6 266 L406.6 262.3 L404.6 259.1 L402.4 256.3 L400.1 253.6 L397.6 251.2 L395 249 L392.4 246.9 L389.6 245.1 L386.6 243.3 L383.3 241.7 L379.6 240.3 L375.8 239 L372 238 L368.3 237.1 L365 236.5 L362.2 236.1 L360 236 Z" fill="#762914"/>
<path d="M498 254 L495.8 253.4 L492.9 252.9 L489.4 252.5 L485.4 252.1 L481.3 251.9 L477.1 252 L473 252.3 L469.1 253 L465.6 254 L462.2 255.2 L458.8 256.7 L455.5 258.5 L452.3 260.4 L449.3 262.7 L446.4 265.1 L443.8 267.8 L441.2 271.1 L438.9 274.8 L436.7 278.8 L434.7 282.9 L433 286.9 L431.6 290.5 L430.6 293.6 L430 296 L430 296 L431.8 294.2 L433.7 291.6 L435.9 288.4 L438.3 284.9 L440.7 281.2 L443.3 277.7 L445.8 274.7 L448.2 272.2 L450.7 270.1 L453.4 268.1 L456.1 266.3 L459 264.5 L461.9 263 L464.9 261.5 L467.9 260.2 L470.9 259 L474 258 L477.7 257.2 L481.6 256.6 L485.6 256.1 L489.4 255.7 L492.9 255.3 L495.8 254.8 L498 254 Z" fill="#762914"/>
<path d="M284.2 353.3 C288.6 344.4 280.4 342.7 276.7 336.4 C272.9 330.1 267.3 322 261.7 315.7 C256.1 309.4 249.8 303.4 242.9 298.8 C236 294.2 227.2 290.5 220.3 288.3 C213.4 286.1 207.8 285.1 201.5 285.6 C195.2 286.1 189.6 287.9 182.7 291.3 C175.8 294.8 167.1 300.7 160.2 306.3 C153.3 311.9 147.1 318.1 141.4 325 C135.8 331.9 130.4 339.5 126.3 347.7 C122.2 355.9 118.7 365.9 116.9 374 C115.2 382.1 115.2 389 115.8 396.5 C116.4 404 118 412.1 120.7 419 C123.4 425.9 127.3 432.2 132 437.9 C136.7 443.5 143 448.5 148.9 452.9 C154.8 457.3 162.4 461.7 167.7 464.2 C173 466.7 176.4 468.3 180.8 468 C185.2 467.7 188.3 468.6 194 462.3 C199.7 456 205.7 442.1 215 430 C224.3 417.9 238.5 402.8 250 390 C261.5 377.2 279.8 362.2 284.2 353.3 Z" fill="#f59a31" stroke="#b4691c" stroke-width="1"/>
<g clip-path="url(#cle)"><path d="M190 459.7 C187.5 459.2 180.8 459.1 175.2 456.7 C169.6 454.3 162 449.8 156.4 445.4 C150.8 441 145.5 435.5 141.4 430.4 C137.3 425.3 134.4 421.3 132 415 C129.6 408.7 127.5 400.9 127 392.8 C126.5 384.7 127.5 375.3 129.3 366.5 C131.1 357.7 134 348.5 137.6 340 C141.2 331.5 148.6 319.8 150.8 315.7 L140 300 L90 330 L90 500 L200 490 Z" fill="#e07d22"/></g>
<path d="M262 362 C266 349.6 257.8 350.4 254 345.8 C250.2 341.2 244.6 337.5 239 334.5 C233.4 331.5 226.6 329.2 220.3 328 C214.1 326.8 207.8 326.2 201.5 327 C195.2 327.8 188.6 329.8 182.7 332.6 C176.8 335.4 170.8 339.2 165.8 343.9 C160.8 348.6 155.9 354.5 152.6 360.8 C149.3 367.1 147 374.9 145.9 381.5 C144.8 388.1 144.8 394.1 145.9 400.3 C147 406.6 149.6 413.4 152.6 419 C155.6 424.6 159.5 429.6 163.9 434 C168.3 438.4 174.2 442.4 178.9 445.4 C183.6 448.4 183.5 456.2 192 452 C200.5 447.8 218.3 435 230 420 C241.7 405 258 374.4 262 362 Z" fill="#4a1d10"/>
<path d="M241 374 C242.4 365.3 236.9 366.1 233.5 362.7 C230.1 359.2 225 355.5 220.3 353.3 C215.6 351.1 210.3 349.8 205.3 349.5 C200.3 349.2 194.9 349.5 190.2 351.4 C185.5 353.3 180.6 356.7 177 360.8 C173.4 364.9 170.3 370.6 168.4 375.9 C166.5 381.2 165.6 387.2 165.8 392.8 C166 398.4 167.3 404.7 169.5 409.7 C171.7 414.7 175.2 419.1 178.9 422.9 C182.7 426.7 188.6 430.1 192 432.3 C195.4 434.5 194.1 438.9 199.6 436 C205.1 433.1 218.1 425.3 225 415 C231.9 404.7 239.6 382.7 241 374 Z" fill="#ee8486"/>
<path d="M231.6 381.5 C232.4 375.4 231.3 381 229.7 378.5 C228.1 376 225.6 370.1 222.2 366.5 C218.8 362.9 213.7 358.9 209 357 C204.3 355.1 198.7 354.6 194 355.2 C189.3 355.8 184.8 357.3 180.8 360.8 C176.8 364.3 172.3 370.7 170 376 C167.7 381.3 166.7 387.2 166.8 392.8 C166.9 398.4 168.5 404.7 170.5 409.7 C172.5 414.7 175.3 419.1 178.9 422.9 C182.5 426.7 188.6 430.1 192 432.3 C195.4 434.5 194.1 438.9 199.6 436 C205.1 433.1 219.7 424.1 225 415 C230.3 405.9 230.8 387.6 231.6 381.5 Z" fill="#f5a4a4"/>
<path d="M567.8 376.5 C560.7 369 572.8 362.1 577.3 354.9 C581.8 347.7 588.1 339.7 594.6 333.2 C601.1 326.7 608.3 320.6 616.2 315.9 C624.1 311.2 633.5 307.4 642.1 305.1 C650.8 302.8 659.5 301.7 668.1 302.1 C676.8 302.5 685.4 303.9 694 307.3 C702.6 310.7 712.1 316.3 720 322.4 C727.9 328.5 735.1 335.7 741.6 344 C748.1 352.3 754.2 362.4 758.9 372.1 C763.6 381.8 767.4 393 769.7 402.4 C772 411.8 772.7 419.6 772.7 428.3 C772.7 437 771.7 446.4 769.7 454.3 C767.8 462.2 764.5 469.1 761 475.9 C757.5 482.7 753 489.8 749 495 C745 500.2 741.5 503.5 737 507 C732.5 510.5 727.2 513.5 722 516 C716.8 518.5 710.3 522 706 522 C701.7 522 698 520.3 696 516 C694 511.7 698.3 507 694 496 C689.7 485 682.3 466 670 450 C657.7 434 637 412.2 620 400 C603 387.8 574.9 384 567.8 376.5 Z" fill="#f59a31" stroke="#b4691c" stroke-width="1"/>
<g clip-path="url(#cre)"><path d="M722 324.6 C723.8 326.8 728.3 330.4 733 337.6 C737.7 344.8 745.8 357.7 750.2 367.8 C754.7 377.9 757.7 387.9 759.7 398 C761.7 408.1 762.4 418.9 762.3 428.3 C762.2 437.7 760.9 446.4 758.9 454.3 C756.9 462.2 753.7 469.6 750.2 475.9 C746.7 482.2 742.4 487.1 738 492 C733.6 496.9 729 500.7 724 505 C719 509.3 710.7 515.8 708 518 L700 530 L800 530 L800 300 L725 305 Z" fill="#e07d22"/></g>
<path d="M605.4 387.3 C602.1 378.6 614.4 373.6 620.5 367.8 C626.6 362 634.2 356.3 642.1 352.7 C650 349.1 659.5 346.6 668.1 346.2 C676.8 345.8 686.1 347.6 694 350.5 C701.9 353.4 709.1 358.1 715.6 363.5 C722.1 368.9 728.4 375.8 732.9 383 C737.4 390.2 740.6 398.4 742.4 406.7 C744.2 415 744.6 424 743.7 432.7 C742.9 441.4 740.5 451.1 737.3 458.6 C734.1 466.2 729 472.6 724.3 478 C719.6 483.4 713.9 487.9 709.2 491 C704.5 494.1 702.7 501.9 696.2 496.7 C689.7 491.5 679.4 472.8 670 460 C660.6 447.2 650.8 432.1 640 420 C629.2 407.9 608.6 396 605.4 387.3 Z" fill="#4a1d10"/>
<path d="M627 400.2 C624 389.4 636 389.2 642.1 385.1 C648.2 381 656.6 377 663.8 375.6 C671 374.2 678.9 374.6 685.4 376.5 C691.9 378.4 698 382.6 702.7 387.3 C707.4 392 711.2 398.5 713.5 404.6 C715.8 410.7 716.9 417.2 716.5 424 C716.1 430.8 714.3 439.1 711.3 445.6 C708.3 452.1 703 458.6 698.3 462.9 C693.6 467.2 687.4 469.8 683.2 471.6 C679 473.4 677.2 477.3 673.3 473.7 C669.4 470.1 667.7 462.2 660 450 C652.3 437.8 630 411 627 400.2 Z" fill="#ee8486"/>
<path d="M635.7 411 C633.5 402.7 641.8 403.1 646.5 400.2 C651.2 397.3 657.7 394.9 663.8 393.8 C669.9 392.7 677.2 392.7 683.2 393.8 C689.2 394.9 695.3 397.8 700 400.5 C704.7 403.2 708.8 406.1 711.5 410 C714.2 413.9 716.5 418.1 716.5 424 C716.5 429.9 714.3 439.1 711.3 445.6 C708.3 452.1 703 458.6 698.3 462.9 C693.6 467.2 687.4 469.8 683.2 471.6 C679 473.4 677.2 477.3 673.3 473.7 C669.4 470.1 666.3 460.4 660 450 C653.7 439.6 638 419.3 635.7 411 Z" fill="#f5a4a4"/>
<path d="M307 345.8 C290 350 278 354 265 360 C255 365 247 369 239 373.4 C228 380 220 386 212.6 393 C208 398 205 402 203.4 406.3 C208 409 213 410 216.6 410 C220 410 223 409.5 225.8 409 C222 414 219 419 216.6 423.4 C212 428 208 432 204.7 435 C200 440 196 445 194 449.7 L192 456 L183 471 L179.5 490 L181 516 L300 516 L330 400 L330 345 Z" fill="#762914"/>
<path d="M307 345.8 C290 350 278 354 265 360 C255 365 247 369 239 373.4 C228 380 220 386 212.6 393 C208 398 205 402 203.4 406.3 C208 409 213 410 216.6 410 C226 410.5 236 409 246 404 C260 396 272 384 282 371 C290 361 298 352 307 345.8 Z" fill="#8a391a"/>
<path d="M194 449.7 L192 456 L183 471 L179.5 490 L181 516 L203 516 L212 482 L228 453 L250 431 L275 416 L262 408 L240 412 L222 426 L205 436 Z" fill="#8c3c1b"/>
<path d="M195.4 516.8 L195.8 513.7 L196.2 509.6 L196.7 504.8 L197.4 499.6 L198.2 494.1 L199.6 488.8 L201.3 483.9 L203.1 479.7 L205.2 475.8 L207.4 471.9 L209.8 468 L212.3 464.3 L214.9 460.6 L217.6 457 L220.3 453.5 L223.1 450.2 L226.2 446.9 L229.8 443.6 L233.8 440.2 L237.9 437 L241.8 433.9 L245.3 431 L248.1 428.4 L250 426 L250 426 L247.1 426.7 L243.5 428.1 L239.3 429.9 L234.8 432.1 L230 434.7 L225.3 437.5 L220.8 440.6 L216.9 443.8 L213.4 447.2 L210.1 450.8 L206.9 454.6 L204 458.6 L201.3 462.8 L198.9 467.2 L196.7 471.7 L194.9 476.3 L193.4 481.4 L192.2 487 L191.2 492.7 L190 498.3 L189 503.6 L188.1 508.4 L187.3 512.3 L186.6 515.2 Z" fill="#9a4922"/>
<path d="M200.8 440.9 L202.5 439.2 L204.9 437.2 L207.8 434.9 L211.1 432.4 L214.5 429.8 L217.8 427.2 L221.1 424.9 L224.1 422.9 L226.9 421.2 L229.8 419.7 L232.6 418.2 L235.5 416.7 L238.4 415.3 L241.3 414 L244.2 412.7 L247.2 411.4 L250.3 410.1 L253.7 408.9 L257.3 407.7 L261 406.5 L264.4 405.4 L267.5 404.3 L270.1 403.2 L272 402 L272 402 L269.8 401.7 L267 401.6 L263.7 401.7 L260 402 L256.2 402.4 L252.2 403 L248.4 403.7 L244.8 404.6 L241.5 405.7 L238.3 406.8 L235.1 408.1 L232 409.5 L228.9 411.1 L225.9 412.9 L222.9 414.9 L219.9 417.1 L216.9 419.7 L213.9 422.6 L210.8 425.8 L207.9 429.1 L205.3 432.3 L203 435.3 L200.9 437.6 L199.2 439.1 Z" fill="#923d1c"/>
<path d="M192 456 L183 471 L179.5 490 L181 516" fill="none" stroke="#4a1b0b" stroke-width=".9"/>
<path d="M307 345.8 C290 350 278 354 265 360 C255 365 247 369 239 373.4 C228 380 220 386 212.6 393 C208 398 205 402 203.4 406.3 C208 409 213 410 216.6 410 C220 410 223 409.5 225.8 409 C222 414 219 419 216.6 423.4 C212 428 208 432 204.7 435 C200 440 196 445 194 449.7 L192 456" fill="none" stroke="#4a1b0b" stroke-width=".8"/>
<path d="M273.3 398.7 C277.4 399.1 289.7 401.6 297.8 401 C305.9 400.4 314.1 397.8 322.2 395 C330.3 392.2 338.5 386.9 346.6 384 C354.7 381.1 362.9 378.7 371 377.9 C379.1 377.1 388.6 377.2 395.5 379 C402.4 380.8 409.8 387.2 412.6 388.9 C411.8 390.3 412.6 395.4 407.7 397.4 C402.8 399.4 391.4 399.8 383.3 401 C375.2 402.2 367 403.2 358.8 404.8 C350.6 406.4 342.5 409.5 334.4 410.9 C326.3 412.3 317.3 413.5 310 413.3 C302.7 413.1 296.5 412 290.4 409.6 C284.3 407.2 276.1 400.5 273.3 398.7 Z" fill="#923d1c"/>
<path d="M330 414 L331.4 415.6 L333.5 417.1 L336.1 418.6 L338.9 420.1 L341.9 421.6 L344.8 423 L347.5 424.5 L349.8 425.9 L351.9 427.2 L354 428.6 L356 429.9 L358.1 431.3 L360.1 432.6 L362.1 434 L364.2 435.4 L366.4 436.9 L368.6 438.6 L371.1 440.7 L373.7 443 L376.4 445.4 L379.1 447.7 L381 450.1 L382.5 452.3 L383.7 453.9 L388.3 450.1 L387 448.7 L385.3 446.7 L383.5 444.2 L381.8 441.1 L380 437.9 L377.9 434.7 L375.8 431.7 L373.6 429.1 L371.5 426.8 L369.3 424.8 L367.1 422.9 L364.7 421.2 L362.2 419.7 L359.7 418.4 L357 417.2 L354.2 416.1 L351.1 415.2 L347.7 414.4 L344.3 413.8 L340.8 413.4 L337.6 413.2 L334.6 413.2 L332 413.4 L330 414 Z" fill="#923d1c"/>
<path d="M388.4 453.8 L389.4 452.3 L390.6 450.3 L392.2 448.1 L394.5 446 L396.9 443.8 L399.3 441.7 L401.6 439.6 L403.8 437.7 L406 436 L408.3 434.1 L410.6 432.3 L412.9 430.4 L415.3 428.5 L417.7 426.6 L420.2 424.6 L422.8 422.6 L425.7 420.4 L429.2 418.1 L432.9 415.6 L436.7 413.1 L440.4 410.7 L443.6 408.3 L446.3 406.1 L448 404 L448 404 L445.3 404 L441.9 404.6 L438 405.6 L433.8 406.9 L429.4 408.4 L425 410 L420.9 411.7 L417.2 413.4 L413.9 415.2 L410.9 417.1 L408 419 L405.3 421.1 L402.8 423.2 L400.5 425.5 L398.3 427.8 L396.2 430.3 L394.1 433 L392.2 435.9 L390.5 438.9 L389 442 L387.7 444.9 L386.1 447.1 L384.7 448.9 L383.6 450.2 Z" fill="#923d1c"/>
<path d="M396 414 L398 414.2 L400.2 413.8 L402.7 413.1 L405.4 412.1 L408.2 411.1 L411.1 409.9 L413.9 408.8 L416.5 407.7 L419.4 406.6 L422.6 405.2 L426.1 403.8 L429.6 402.3 L432.9 400.7 L435.9 399.2 L438.3 397.6 L440 396 L440 396 L437.7 395.6 L434.8 395.6 L431.5 395.9 L427.8 396.5 L424 397.2 L420.2 398.1 L416.7 399.1 L413.5 400.3 L410.6 401.6 L407.7 403.2 L405 405 L402.5 406.9 L400.2 408.7 L398.4 410.5 L396.9 412.3 L396 414 Z" fill="#923d1c"/>
<path d="M470 520 L698 520 L698 516 C697.8 514.3 697.5 509.1 697 506 C696.5 502.9 697 501 695 497.5 C693 494 688.7 488.9 685 485 C681.3 481.1 675.8 477.3 673 474 C670.2 470.7 667.1 468 668.1 465.1 C669.1 462.2 675.3 459.6 678.9 456.5 C682.5 453.4 690.8 448.9 689.7 446.5 C688.6 444.1 678.5 444.9 672.4 442.2 C666.3 439.5 658.8 435 653 430.5 C647.2 426 642.1 420.4 637.8 415.4 C633.5 410.3 632.4 404.9 627 400.2 C621.6 395.5 612.2 390.5 605.4 387.3 C598.6 384.1 592.3 382.6 586 380.8 C579.7 379 570.8 377.2 567.8 376.5 L550 385 L520 393 L490 400 L470 406 Z" fill="#923d1c"/>
<clipPath id="cfr"><path d="M470 520 L698 520 L698 516 C697.8 514.3 697.5 509.1 697 506 C696.5 502.9 697 501 695 497.5 C693 494 688.7 488.9 685 485 C681.3 481.1 675.8 477.3 673 474 C670.2 470.7 667.1 468 668.1 465.1 C669.1 462.2 675.3 459.6 678.9 456.5 C682.5 453.4 690.8 448.9 689.7 446.5 C688.6 444.1 678.5 444.9 672.4 442.2 C666.3 439.5 658.8 435 653 430.5 C647.2 426 642.1 420.4 637.8 415.4 C633.5 410.3 632.4 404.9 627 400.2 C621.6 395.5 612.2 390.5 605.4 387.3 C598.6 384.1 592.3 382.6 586 380.8 C579.7 379 570.8 377.2 567.8 376.5 L550 385 L520 393 L490 400 L470 406 Z"/></clipPath>
<g clip-path="url(#cfr)" fill="#762914">
<path d="M556 394 L557.7 394.9 L560.1 395.9 L563 397 L566.2 398.1 L569.6 399.3 L573 400.5 L576.3 401.8 L579.3 403 L582.1 404.2 L584.7 405.4 L587.3 406.5 L589.8 407.7 L592.5 409 L595.2 410.4 L598.2 412 L601.5 413.7 L605.1 415.8 L609 418.2 L613.1 420.8 L617.4 423.5 L621.9 426.2 L626.3 429 L630.8 431.6 L635.2 434 L639.6 436.4 L644.1 438.7 L648.7 441.1 L653.4 443.4 L657.9 445.5 L662.2 447.4 L666.2 449 L669.8 450.2 L673.2 451 L676.2 451.3 L679 451.2 L681.4 450.9 L683.5 450.5 L685.3 450 L686.8 449.5 L688 449 L688 449 L686.7 448.6 L685.1 448.5 L683.3 448.5 L681.3 448.4 L679.1 448.2 L676.6 447.8 L674 447.2 L671.2 446.2 L667.9 444.8 L664.2 442.9 L660.2 440.8 L655.9 438.5 L651.4 436.1 L646.9 433.5 L642.5 431 L638.2 428.6 L634 426.1 L629.7 423.5 L625.3 420.7 L620.9 418 L616.6 415.3 L612.3 412.7 L608.3 410.3 L604.5 408.3 L601 406.5 L597.8 405 L594.8 403.8 L592 402.6 L589.2 401.7 L586.4 400.7 L583.6 399.9 L580.7 399 L577.5 398.1 L574 397.2 L570.4 396.4 L566.9 395.7 L563.6 395 L560.5 394.5 L558 394.1 L556 394 Z"/>
<path d="M540 408 L541.4 409.3 L543.4 410.7 L545.8 412.2 L548.6 413.8 L551.5 415.5 L554.6 417.2 L557.7 419 L560.8 420.7 L563.7 422.3 L566.7 423.9 L569.8 425.6 L572.9 427.2 L576.2 429 L579.7 430.8 L583.3 432.9 L587.3 435.1 L591.7 437.6 L596.6 440.4 L601.7 443.5 L607 446.6 L612.4 449.8 L617.7 452.9 L622.9 455.9 L627.8 458.7 L632.5 461.4 L637.2 463.9 L641.7 466.4 L646.2 468.9 L650.5 471.2 L654.6 473.5 L658.5 475.6 L662.2 477.7 L665.6 479.8 L669 482 L672.3 484.2 L675.4 486.3 L678.3 488.2 L680.7 490.1 L682.6 491.7 L684.1 493 L685.9 491 L684.3 489.7 L682.3 488.1 L680.1 486 L677.6 483.6 L674.9 480.9 L671.9 478.2 L668.8 475.5 L665.4 472.9 L661.9 470.3 L658.2 467.7 L654.2 465 L650 462.3 L645.7 459.6 L641.3 456.9 L636.8 454.1 L632.2 451.3 L627.4 448.3 L622.3 445.2 L617 442 L611.6 438.8 L606.2 435.7 L601 432.7 L596 430 L591.5 427.5 L587.3 425.4 L583.3 423.5 L579.6 421.8 L576.2 420.4 L572.8 419 L569.6 417.7 L566.4 416.5 L563.2 415.3 L560 414.1 L556.6 412.9 L553.2 411.7 L550 410.6 L547 409.6 L544.2 408.8 L541.9 408.2 L540 408 Z"/>
<path d="M560 440 L560.7 441.4 L561.7 442.8 L563 444.3 L564.6 446 L566.5 447.8 L568.6 449.9 L571.1 452 L573.9 454.4 L577.2 457 L580.9 459.9 L584.9 462.9 L589.3 466.2 L593.7 469.4 L598.3 472.7 L602.8 475.9 L607.1 479 L611.5 482 L616.1 485 L620.7 487.9 L625.3 490.8 L629.8 493.7 L634 496.4 L637.8 499 L641.2 501.5 L644.3 504.1 L647.1 506.8 L649.7 509.5 L651.9 512.3 L653.8 515.1 L655.3 517.7 L656.7 519.9 L657.8 521.6 L662.2 518.4 L661 516.9 L659.5 514.9 L657.8 512.4 L655.8 509.6 L653.6 506.5 L651.4 503.1 L648.8 499.7 L645.8 496.5 L642.4 493.3 L638.6 490.1 L634.4 487 L630 483.8 L625.5 480.7 L621 477.6 L616.6 474.6 L612.3 471.6 L607.9 468.6 L603.4 465.5 L598.7 462.3 L594.1 459.2 L589.6 456.3 L585.3 453.5 L581.4 451 L577.9 448.8 L574.8 447 L571.9 445.3 L569.4 443.9 L567.1 442.6 L565 441.6 L563.2 440.8 L561.5 440.2 L560 440 Z"/>
<path d="M585 480 L585.4 481.9 L586.5 483.8 L587.9 485.9 L589.5 488.2 L591.3 490.4 L593.2 492.8 L595 495.1 L596.8 497.4 L598.7 500 L600.9 503.1 L603.3 506.5 L605.8 510 L608.2 513.3 L609.9 516.6 L611.2 519.5 L612.2 521.6 L617.8 518.4 L616.4 516.5 L614.7 513.9 L612.7 510.7 L611.1 506.9 L609.3 503 L607.3 499.1 L605.3 495.6 L603.2 492.6 L601 490 L598.6 487.6 L596.1 485.5 L593.6 483.7 L591.2 482.2 L588.9 481.1 L586.9 480.3 L585 480 Z"/>
</g>
<path d="M695 497.5 C693.3 495.4 688.7 488.9 685 485 C681.3 481.1 675.8 477.3 673 474 C670.2 470.7 667.1 468 668.1 465.1 C669.1 462.2 675.3 459.6 678.9 456.5 C682.5 453.4 690.8 448.9 689.7 446.5 C688.6 444.1 678.5 444.9 672.4 442.2 C666.3 439.5 658.8 435 653 430.5 C647.2 426 642.1 420.4 637.8 415.4 C633.5 410.3 632.4 404.9 627 400.2 C621.6 395.5 612.2 390.5 605.4 387.3 C598.6 384.1 592.3 382.6 586 380.8 C579.7 379 570.8 377.2 567.8 376.5" fill="none" stroke="#4a1b0b" stroke-width=".9"/>
<path d="M398 388 L399.1 389 L400.7 390.1 L402.6 391.3 L404.7 392.7 L407 394.1 L409.5 395.4 L411.9 396.7 L414.3 397.9 L416.6 399 L419.1 400 L421.6 401.1 L424.2 402 L426.7 403 L429.3 403.8 L431.8 404.6 L434.3 405.4 L436.6 406 L438.8 406.5 L441 407 L443.2 407.4 L445.4 407.7 L447.7 408 L450 408.2 L452.5 408.4 L455.2 408.6 L458.1 408.6 L461.1 408.6 L464.2 408.6 L467.2 408.5 L470.2 408.4 L473 408.2 L475.6 408 L478 407.8 L480.3 407.4 L482.4 407 L484.4 406.6 L486.3 406.2 L488 405.8 L489.6 405.5 L491.1 405.1 L492.4 404.9 L493.4 404.7 L494.4 404.5 L495.3 404.3 L496.4 404.1 L497.6 403.8 L499.2 403.4 L501.1 402.9 L503.6 402.3 L506.4 401.6 L509.4 400.7 L512.7 399.9 L516.1 399 L519.5 398.1 L522.8 397.2 L526 396.3 L529.1 395.5 L532.3 394.7 L535.5 393.8 L538.7 393 L541.8 392.2 L544.9 391.4 L547.9 390.6 L550.7 389.9 L553.5 389.1 L556.1 388.4 L558.7 387.7 L561.1 387 L563.5 386.3 L565.8 385.6 L568.1 385.1 L570.3 384.5 L572.5 384.1 L574.8 383.7 L577.1 383.3 L579.3 382.9 L581.4 382.6 L583.2 382.3 L584.8 382 L586 381.5 L586 381.5 L584.8 381.2 L583.2 380.9 L581.3 380.7 L579.2 380.6 L576.9 380.4 L574.5 380.4 L572.1 380.4 L569.7 380.5 L567.4 380.6 L565 380.9 L562.5 381.1 L560 381.5 L557.4 381.9 L554.8 382.3 L552.1 382.7 L549.3 383.1 L546.4 383.6 L543.3 384.1 L540.2 384.7 L537 385.2 L533.7 385.8 L530.4 386.4 L527.2 387.1 L524 387.7 L520.7 388.3 L517.3 389.1 L513.9 389.8 L510.4 390.6 L507.1 391.3 L504 392 L501.3 392.6 L498.9 393.1 L497 393.5 L495.5 393.7 L494.4 393.9 L493.4 394.1 L492.5 394.2 L491.6 394.4 L490.4 394.6 L488.9 394.9 L487.3 395.2 L485.6 395.6 L483.9 396.1 L482.1 396.5 L480.3 396.9 L478.5 397.3 L476.5 397.7 L474.4 398 L472.1 398.3 L469.4 398.5 L466.6 398.8 L463.7 399 L460.8 399.2 L458 399.4 L455.2 399.5 L452.7 399.6 L450.4 399.6 L448.2 399.6 L446.1 399.6 L444.1 399.5 L442.1 399.4 L440.1 399.2 L438 398.9 L435.7 398.6 L433.4 398.3 L430.9 397.8 L428.3 397.3 L425.8 396.7 L423.2 396.1 L420.6 395.4 L418.1 394.8 L415.7 394.1 L413.3 393.3 L410.8 392.5 L408.3 391.5 L405.8 390.6 L403.4 389.7 L401.3 388.9 L399.5 388.3 L398 388 Z" fill="#762914"/>
<path d="M217.6 514 C218 511.4 218.6 503.7 220 498.4 C221.4 493.1 223.3 487.9 225.9 482 C228.5 476.1 231.8 469.1 235.3 463.2 C238.8 457.3 242.7 451.6 247 446.7 C251.3 441.8 256 437.5 261.1 433.8 C266.2 430.1 271.7 426.8 277.6 424.4 C283.5 422 290.1 420.2 296.4 419.2 C302.7 418.2 309.3 418 315.2 418.5 C321.1 419 326.1 420 331.6 422 C337.1 424 342.9 427.2 348 430.3 C353.1 433.4 357.9 437.1 362.2 440.8 C366.5 444.5 370.2 448.9 373.9 452.6 C377.6 456.3 382.8 461.4 384.6 463.2 C386.6 461 392.2 454.5 396.5 450.2 C400.8 445.9 405.5 441.6 410.6 437.3 C415.7 433 421.1 428.1 427 424.4 C432.9 420.7 439.5 417.6 445.8 415 C452.1 412.4 458.3 410.5 464.6 409.1 C470.9 407.7 477.1 407 483.4 406.8 C489.7 406.6 495.9 406.7 502.2 407.9 C508.5 409.1 515.1 411.2 521 413.8 C526.9 416.4 532 419.3 537.5 423.2 C543 427.1 548.8 432.2 553.9 437.3 C559 442.4 563.7 447.9 568 453.8 C572.3 459.7 576.3 466 579.8 472.6 C583.3 479.2 586.6 486.8 589.2 493.7 C591.8 500.6 594.5 510.6 595.5 514 L595.5 520 L217.6 520 Z" fill="#e07d22" stroke="#e2a863" stroke-width="1.3"/>
<path d="M220.3 514 C220.8 511.3 221.7 503.2 223 498 C224.3 492.8 225.8 488.6 228.2 483 C230.6 477.4 234.1 470 237.6 464.3 C241.1 458.6 245.1 453.3 249.4 448.6 C253.7 443.9 258.6 439.6 263.5 436 C268.4 432.4 273.2 429.5 278.7 427.2 C284.2 424.9 290.3 423 296.4 422 C302.5 421 309.5 420.8 315.2 421.3 C320.9 421.8 325.3 422.9 330.4 425 C335.5 427.1 341 430.6 345.7 433.8 C350.4 437 354.7 440.7 358.6 444.4 C362.5 448.1 365.9 451.9 369.2 456 C372.5 460.1 376 465.3 378.6 469 C381.2 472.7 383.6 476.8 384.6 478.4 C386.2 476.2 390.6 469.8 394.1 465.5 C397.7 461.2 401.6 456.7 405.9 452.6 C410.2 448.5 414.9 444.5 420 440.8 C425.1 437.1 430.5 433.2 436.4 430.3 C442.3 427.4 448.9 425 455.2 423.2 C461.5 421.4 467.7 420.4 474 419.7 C480.3 419 486.5 418.7 492.8 419.2 C499.1 419.7 505.7 420.8 511.6 422.7 C517.5 424.6 522.6 426.9 528.1 430.3 C533.6 433.7 539.4 438.3 544.5 443.2 C549.6 448.1 554.3 453.7 558.6 459.6 C562.9 465.5 566.9 471.7 570.4 478.4 C573.9 485.1 577.5 493.7 579.8 499.6 C582.1 505.5 583.3 511.6 584 514 L584 520 L220.3 520 Z" fill="#f59a31"/>
<path d="M251.2 487.1 C251.9 485.1 253.1 478.7 255.2 474.9 C257.2 471.1 260.2 467.2 263.5 464.3 C266.8 461.4 271.3 458.8 275.2 457.3 C279.1 455.9 283.1 455.5 287 455.6 C290.9 455.7 295.2 456.9 298.7 458 C302.2 459.1 305.8 460.8 308.1 462 C310.4 463.2 311.6 464.5 312.3 465 C310.8 464.7 306.8 463.5 303.4 463.2 C300 462.9 295.6 462.8 291.7 463.2 C287.8 463.6 283.8 464.1 279.9 465.5 C276 466.9 271.7 469 268.2 471.4 C264.7 473.8 261.6 477 258.8 479.6 C256 482.2 252.5 485.9 251.2 487.1 Z" fill="#0c0c0c"/>
<path d="M472.8 474.4 C474.2 473.1 477.8 468.9 481.1 466.7 C484.4 464.5 489.3 462.4 492.8 461.3 C496.3 460.2 499.1 459.9 502.2 460.3 C505.3 460.7 508.5 461.6 511.6 463.6 C514.7 465.7 518.2 469.4 521 472.6 C523.8 475.9 526.1 479.7 528.1 483.1 C530.1 486.5 532.4 491.5 533.2 493.2 C531.6 491.7 526.6 487.1 523.4 484.3 C520.2 481.5 517.5 478.4 514 476.1 C510.5 473.8 506.1 471.8 502.2 470.7 C498.3 469.6 494 469.6 490.5 469.7 C487 469.8 484.1 470.6 481.1 471.4 C478.2 472.2 474.2 473.9 472.8 474.4 Z" fill="#0c0c0c"/>
<path d="M150.8 315.7 C125 345 118 400 132 430 C145 452 170 462 192 456 C205 420 240 375 284 353.5" fill="none" stroke="#7d7ab5" stroke-width=".8" opacity=".85"/>
<circle cx="150.8" cy="315.7" r="1.8" fill="#d4d4ee" stroke="#7d7ab5" stroke-width=".6"/>
<circle cx="158.5" cy="321.5" r="1.8" fill="#d4d4ee" stroke="#7d7ab5" stroke-width=".6"/>
<circle cx="137" cy="421" r="1.8" fill="#d4d4ee" stroke="#7d7ab5" stroke-width=".6"/>
<circle cx="192" cy="453" r="1.8" fill="#d4d4ee" stroke="#7d7ab5" stroke-width=".6"/>
<circle cx="194" cy="461.6" r="1.8" fill="#d4d4ee" stroke="#7d7ab5" stroke-width=".6"/>
<circle cx="277" cy="353.7" r="1.8" fill="#d4d4ee" stroke="#7d7ab5" stroke-width=".6"/>
<circle cx="285.8" cy="355.8" r="1.8" fill="#d4d4ee" stroke="#7d7ab5" stroke-width=".6"/>
</svg>
<!--/LION-->
</div>

<!-- TOOLBOX -->
<div id="tool" class="abs">
<div class="abs" style="left:0;top:-46px;width:62px;height:532px">
<div class="abs" style="left:0;top:46px;width:4px;height:486px;background:#464646"></div><div class="abs" style="left:3px;top:55px;width:1px;height:477px;background:#3a3a3a"></div>
<div class="abs" style="left:4px;top:46px;width:57px;height:10px;background:#2f2f2f"></div>
<div class="abs" style="left:59px;top:62px;width:3px;height:470px;background:linear-gradient(90deg,#3c3c3c,#2a2a2a)"></div>
<div class="tri-l" style="left:8px;top:48px;border-right-width:3px;border-top-width:2.5px;border-bottom-width:2.5px;border-right-color:#ccc"></div><div class="tri-l" style="left:11px;top:48px;border-right-width:3px;border-top-width:2.5px;border-bottom-width:2.5px;border-right-color:#ccc"></div>
<div class="abs" style="left:24px;top:59px;width:15px;height:2px;background:repeating-linear-gradient(90deg,#2e2e2e 0 2px,transparent 2px 3px)"></div>
<div class="abs" style="left:33px;top:69px;width:22px;height:18px;background:#333;border:1px solid #2a2a2a"></div>
<div class="abs" style="left:8px;top:107px;width:48px;height:1px;background:#424242"></div>
<div class="abs" style="left:8px;top:184px;width:48px;height:1px;background:#424242"></div>
<div class="abs" style="left:8px;top:243px;width:48px;height:1px;background:#424242"></div>
<div class="abs" style="left:8px;top:281px;width:48px;height:1px;background:#424242"></div>
<svg class="abs" style="left:13px;top:71px" width="15" height="15" viewBox="0 0 18 18"><path d="M5 2 L5 15 L8.2 12 L10.3 16.5 L12.3 15.6 L10.2 11.2 L14.2 11 Z" fill="#1c1c1c" stroke="#e6e6e6" stroke-width="1.1"/></svg>
<svg class="abs" style="left:37px;top:71px" width="15" height="15" viewBox="0 0 18 18"><path d="M5 2 L5 15 L8.2 12 L10.3 16.5 L12.3 15.6 L10.2 11.2 L14.2 11 Z" fill="#e8e8e8" stroke="#e8e8e8" stroke-width=".6"/></svg>
<div class="abs" style="left:53px;top:85px;width:0;height:0;border-left:3px solid transparent;border-bottom:3px solid #cfcfcf"></div>
<svg class="abs" style="left:13px;top:90px" width="15" height="15" viewBox="0 0 18 18"><path d="M5.5 1.5 L6.6 4.6 L9.8 4.4 L7.3 6.5 L8.4 9.6 L5.6 7.8 L2.9 9.7 L3.8 6.5 L1.2 4.6 L4.5 4.6 Z" fill="#d6d6d6"/><path d="M8 8 L15.5 15.5" stroke="#d6d6d6" stroke-width="1.8"/></svg>
<div class="abs" style="left:29px;top:104px;width:0;height:0;border-left:3px solid transparent;border-bottom:3px solid #cfcfcf"></div>
<svg class="abs" style="left:37px;top:90px" width="15" height="15" viewBox="0 0 18 18"><ellipse cx="9" cy="7" rx="7" ry="4.2" fill="none" stroke="#d6d6d6" stroke-width="1.5"/><path d="M4 10 C2 12 4 14 5 15" fill="none" stroke="#d6d6d6" stroke-width="1.3"/><path d="M9 5 L9 15 L11.3 12.8 L13 16 L14.4 15.3 L12.8 12.2 L15.5 12 Z" fill="#e6e6e6" stroke="#444" stroke-width=".5"/></svg>
<div class="abs" style="left:53px;top:104px;width:0;height:0;border-left:3px solid transparent;border-bottom:3px solid #cfcfcf"></div>
<svg class="abs" style="left:13px;top:111px" width="15" height="15" viewBox="0 0 18 18"><path d="M10.5 1.5 L16 7 L13.5 8 L7 14.5 L2 16 L3.5 11 L10 4.5 Z" fill="#d6d6d6"/><path d="M2.5 15.5 L8 10" stroke="#484848" stroke-width="1"/><circle cx="8.3" cy="9.7" r="1.2" fill="#484848"/><path d="M9.7 4.2 L13.8 8.3" stroke="#484848" stroke-width="1"/></svg>
<div class="abs" style="left:29px;top:125px;width:0;height:0;border-left:3px solid transparent;border-bottom:3px solid #cfcfcf"></div>
<svg class="abs" style="left:37px;top:111px" width="15" height="15" viewBox="0 0 18 18"><path d="M11.5 1.5 L16.5 6.5 L14 7.5 L9 13 L5 14 L6 10 L11 5 Z" fill="#d6d6d6"/><path d="M5.5 13.5 L9.5 9.5" stroke="#484848" stroke-width="1"/><path d="M10.7 4.2 L14.3 7.8" stroke="#484848" stroke-width="1"/><path d="M4 4 C1 6 5 8 2.5 11 C1 13 3 16 6 16" fill="none" stroke="#d6d6d6" stroke-width="1.2"/></svg>
<div class="abs" style="left:53px;top:125px;width:0;height:0;border-left:3px solid transparent;border-bottom:3px solid #cfcfcf"></div>
<svg class="abs" style="left:13px;top:129px" width="15" height="15" viewBox="0 0 18 18"><text x="9" y="15.5" text-anchor="middle" font-family="Liberation Serif,serif" font-size="19" fill="#dcdcdc">T</text></svg>
<div class="abs" style="left:29px;top:143px;width:0;height:0;border-left:3px solid transparent;border-bottom:3px solid #cfcfcf"></div>
<svg class="abs" style="left:37px;top:129px" width="15" height="15" viewBox="0 0 18 18"><path d="M3 15.5 L15 2.5" stroke="#d6d6d6" stroke-width="1.6"/></svg>
<div class="abs" style="left:53px;top:143px;width:0;height:0;border-left:3px solid transparent;border-bottom:3px solid #cfcfcf"></div>
<svg class="abs" style="left:13px;top:148px" width="15" height="15" viewBox="0 0 18 18"><rect x="2.5" y="3.5" width="13" height="11" fill="#8c8c8c" stroke="#d6d6d6" stroke-width="1.2"/></svg>
<div class="abs" style="left:29px;top:162px;width:0;height:0;border-left:3px solid transparent;border-bottom:3px solid #cfcfcf"></div>
<svg class="abs" style="left:37px;top:148px" width="15" height="15" viewBox="0 0 18 18"><path d="M15.8 1.2 L17 2.4 L9.5 11 L7.8 9.4 Z" fill="#d6d6d6"/><path d="M7.2 10 L9 11.8 C8 15 4 16.5 1 15.5 C3.5 14.5 4 11 7.2 10 Z" fill="#d6d6d6"/></svg>
<div class="abs" style="left:53px;top:162px;width:0;height:0;border-left:3px solid transparent;border-bottom:3px solid #cfcfcf"></div>
<svg class="abs" style="left:13px;top:166px" width="15" height="15" viewBox="0 0 18 18"><path d="M12.5 1.5 L16.5 5.5 L6.5 15.5 L2 16.5 L2.8 11.5 Z" fill="#d6d6d6"/><path d="M11 3.5 L14.5 7" stroke="#484848" stroke-width="1"/><path d="M3.2 12 L6 14.8" stroke="#484848" stroke-width=".9"/></svg>
<div class="abs" style="left:29px;top:180px;width:0;height:0;border-left:3px solid transparent;border-bottom:3px solid #cfcfcf"></div>
<svg class="abs" style="left:37px;top:166px" width="15" height="15" viewBox="0 0 18 18"><circle cx="12.5" cy="5" r="2.3" fill="none" stroke="#d6d6d6" stroke-width="1.3"/><circle cx="12.5" cy="13" r="2.3" fill="none" stroke="#d6d6d6" stroke-width="1.3"/><path d="M10.8 6.3 L1.5 12.5 M10.8 11.7 L1.5 5.5" stroke="#d6d6d6" stroke-width="1.4"/></svg>
<div class="abs" style="left:53px;top:180px;width:0;height:0;border-left:3px solid transparent;border-bottom:3px solid #cfcfcf"></div>
<svg class="abs" style="left:13px;top:187px" width="15" height="15" viewBox="0 0 18 18"><path d="M4.2 5 A6 6 0 1 0 9 3" fill="none" stroke="#d6d6d6" stroke-width="1.5" stroke-dasharray="2.2 1.6"/><path d="M9.5 0.5 L5.2 3.2 L9.5 6 Z" fill="#d6d6d6"/></svg>
<div class="abs" style="left:29px;top:201px;width:0;height:0;border-left:3px solid transparent;border-bottom:3px solid #cfcfcf"></div>
<svg class="abs" style="left:37px;top:187px" width="15" height="15" viewBox="0 0 18 18"><rect x="2" y="8" width="8" height="8" fill="none" stroke="#d6d6d6" stroke-width="1.1"/><rect x="6" y="2.5" width="10.5" height="10" fill="#6a6a6a" stroke="#d6d6d6" stroke-width="1.1"/><path d="M9 10 L14 5 M14 5 H11 M14 5 V8" stroke="#d6d6d6" stroke-width="1.1" fill="none"/></svg>
<div class="abs" style="left:53px;top:201px;width:0;height:0;border-left:3px solid transparent;border-bottom:3px solid #cfcfcf"></div>
<svg class="abs" style="left:13px;top:206px" width="15" height="15" viewBox="0 0 18 18"><path d="M3 15 C2 11 6 11 5 7 C4.5 4 7 2 9 4 C10 5 9 7 10.5 8 C12 9 14 7 16 8.5 C14 10 12.5 10 11.5 12 C10.5 14 12 15 10 16 C9 14 8 13 6.5 13.5 C5 14 4.5 15.5 3 15 Z" fill="#d6d6d6"/></svg>
<div class="abs" style="left:29px;top:220px;width:0;height:0;border-left:3px solid transparent;border-bottom:3px solid #cfcfcf"></div>
<svg class="abs" style="left:37px;top:206px" width="15" height="15" viewBox="0 0 18 18"><path d="M2 3 L2 13.5 L10 8.2 Z" fill="#d6d6d6"/><path d="M8 3.5 H16 V14.5 H6" fill="none" stroke="#d6d6d6" stroke-width="1.6" stroke-dasharray="2 2"/></svg>
<div class="abs" style="left:53px;top:220px;width:0;height:0;border-left:3px solid transparent;border-bottom:3px solid #cfcfcf"></div>
<svg class="abs" style="left:13px;top:225px" width="15" height="15" viewBox="0 0 18 18"><circle cx="6.5" cy="6.5" r="4.5" fill="none" stroke="#d6d6d6" stroke-width="1.2"/><circle cx="9.5" cy="9" r="4.5" fill="none" stroke="#d6d6d6" stroke-width="1.2"/><path d="M9.5 8 L9.5 17 L11.7 15 L13.2 17.8 L14.6 17.1 L13.2 14.3 L16 14 Z" fill="#e6e6e6" stroke="#444" stroke-width=".5"/></svg>
<div class="abs" style="left:29px;top:239px;width:0;height:0;border-left:3px solid transparent;border-bottom:3px solid #cfcfcf"></div>
<svg class="abs" style="left:37px;top:225px" width="15" height="15" viewBox="0 0 18 18"><path d="M3 2 V15.5 H16 L11 10 L3 2 Z" fill="none" stroke="#d6d6d6" stroke-width="1.1"/><path d="M3 6 L8 8 V15.5 M3 10.5 L12 12 M5.5 4.5 V15.5 M3 13 L14 14" stroke="#d6d6d6" stroke-width=".9" fill="none"/><path d="M8 8 L11 10 V15.5" stroke="#d6d6d6" stroke-width=".9" fill="none"/></svg>
<div class="abs" style="left:53px;top:239px;width:0;height:0;border-left:3px solid transparent;border-bottom:3px solid #cfcfcf"></div>
<svg class="abs" style="left:13px;top:245px" width="15" height="15" viewBox="0 0 18 18"><rect x="2" y="3.5" width="14" height="11" fill="none" stroke="#d6d6d6" stroke-width="1.2"/><path d="M2 8 C6 6 10 11 16 8.5 M6.5 3.5 C5 7 9 10 7 14.5 M11.5 3.5 C10 7 14 10 12 14.5 M2 11.5 C6 10 10 13.5 16 12" fill="none" stroke="#d6d6d6" stroke-width="1"/></svg>
<svg class="abs" style="left:37px;top:245px" width="15" height="15" viewBox="0 0 18 18"><defs><linearGradient id="gg" x1="0" x2="1"><stop offset="0" stop-color="#3a3a3a"/><stop offset="1" stop-color="#e8e8e8"/></linearGradient></defs><rect x="2.5" y="4" width="13" height="10.5" fill="url(#gg)" stroke="#d6d6d6" stroke-width="1.1"/></svg>
<svg class="abs" style="left:13px;top:264px" width="15" height="15" viewBox="0 0 18 18"><path d="M13.5 1.2 C15 0.5 17.5 3 16.8 4.5 L14 7.2 L10.8 4 Z" fill="#d6d6d6"/><path d="M9.5 4.2 L13.8 8.5" stroke="#d6d6d6" stroke-width="1.8"/><path d="M10.5 6 L3.5 13 L2 16 L5 14.5 L12 7.5 Z" fill="none" stroke="#d6d6d6" stroke-width="1.2"/></svg>
<div class="abs" style="left:29px;top:278px;width:0;height:0;border-left:3px solid transparent;border-bottom:3px solid #cfcfcf"></div>
<svg class="abs" style="left:37px;top:264px" width="15" height="15" viewBox="0 0 18 18"><rect x="2" y="2" width="6.5" height="6.5" fill="#d6d6d6"/><circle cx="8.5" cy="8.5" r="3.8" fill="#8a8a8a" stroke="#d6d6d6" stroke-width="1"/><circle cx="12" cy="12" r="4" fill="#4a4a4a" stroke="#d6d6d6" stroke-width="1.3"/></svg>
<svg class="abs" style="left:13px;top:285px" width="15" height="15" viewBox="0 0 18 18"><rect x="6" y="5" width="9" height="11" rx="1.5" fill="none" stroke="#d6d6d6" stroke-width="1.3"/><circle cx="10.5" cy="10.5" r="2.2" fill="none" stroke="#d6d6d6" stroke-width="1.2"/><path d="M8 5 V3 H12 V5" fill="none" stroke="#d6d6d6" stroke-width="1.2"/><path d="M1.5 2.5 H5 M1.5 5 H4" stroke="#d6d6d6" stroke-width="1" stroke-dasharray="1 1"/></svg>
<div class="abs" style="left:29px;top:299px;width:0;height:0;border-left:3px solid transparent;border-bottom:3px solid #cfcfcf"></div>
<svg class="abs" style="left:37px;top:285px" width="15" height="15" viewBox="0 0 18 18"><path d="M2 2 V15.5 H16.5" fill="none" stroke="#d6d6d6" stroke-width="1.1"/><rect x="4.5" y="8" width="2.5" height="7" fill="#d6d6d6"/><rect x="8.2" y="4" width="2.5" height="11" fill="#d6d6d6"/><rect x="12" y="9.5" width="2.5" height="5.5" fill="#d6d6d6"/></svg>
<div class="abs" style="left:53px;top:299px;width:0;height:0;border-left:3px solid transparent;border-bottom:3px solid #cfcfcf"></div>
<svg class="abs" style="left:13px;top:304px" width="15" height="15" viewBox="0 0 18 18"><rect x="4.5" y="4.5" width="9" height="9" fill="none" stroke="#d6d6d6" stroke-width="1.2"/><path d="M1 4.5 H17 M1 13.5 H17 M4.5 1 V17 M13.5 1 V17" stroke="#d6d6d6" stroke-width=".8"/></svg>
<svg class="abs" style="left:37px;top:304px" width="15" height="15" viewBox="0 0 18 18"><path d="M16.5 1.5 L8 8 L2 15.5 L9.5 12.5 L16.5 1.5 Z" fill="#d6d6d6"/><path d="M2 15.5 L9 8.5" stroke="#555" stroke-width=".8"/></svg>
<div class="abs" style="left:53px;top:318px;width:0;height:0;border-left:3px solid transparent;border-bottom:3px solid #cfcfcf"></div>
<svg class="abs" style="left:13px;top:324px" width="15" height="15" viewBox="0 0 18 18"><path d="M4 2 H10.5 L14 5.5 V14 H4 Z" fill="#8a8a8a" stroke="#d6d6d6" stroke-width="1" stroke-dasharray="1.4 1"/><path d="M10.5 2 V5.5 H14" fill="none" stroke="#d6d6d6" stroke-width=".9"/><path d="M1 12 L5 15 M2 16.5 L4 14" stroke="#d6d6d6" stroke-width="1"/></svg>
<div class="abs" style="left:29px;top:338px;width:0;height:0;border-left:3px solid transparent;border-bottom:3px solid #cfcfcf"></div>
<svg class="abs" style="left:37px;top:324px" width="15" height="15" viewBox="0 0 18 18"><circle cx="7.5" cy="7" r="4.8" fill="#7a7a7a" stroke="#d6d6d6" stroke-width="1.6"/><path d="M11 10.5 L16 15.5" stroke="#d6d6d6" stroke-width="2.4"/></svg>
<div class="abs" style="left:24px;top:357px;width:28px;height:27px;background:#fff"></div>
<div class="abs" style="left:30px;top:363px;width:16px;height:15px;background:#6b2b22"></div>
<svg class="abs" style="left:24px;top:357px" width="28" height="27" viewBox="0 0 28 27"><path d="M0 27 L28 0" stroke="#d2202a" stroke-width="1.6"/></svg>
<div class="abs" style="left:9px;top:343px;width:28px;height:27px;background:#fabd7c"></div>
<svg class="abs" style="left:42px;top:342px" width="11" height="11" viewBox="0 0 11 11"><path d="M2 7 C2 3 5 2 8 3" fill="none" stroke="#cfcfcf" stroke-width="1.2"/><path d="M0 6 L2.2 9.5 L4.2 6 Z M6.5 1 L10 3.2 L6.5 5.2 Z" fill="#cfcfcf"/></svg>
<div class="abs" style="left:13px;top:378px;width:6px;height:6px;background:#fff;border:1px solid #111"></div><div class="abs" style="left:10px;top:375px;width:6px;height:6px;background:#eee;border:1px solid #111"></div>
<div class="abs" style="left:11px;top:390px;width:14px;height:15px;background:#2c2c2c"></div>
<div class="abs" style="left:13px;top:392px;width:10px;height:11px;background:#f9b768"></div>
<div class="abs" style="left:28px;top:392px;width:10px;height:11px;background:linear-gradient(90deg,#fff,#111);border:1px solid #222"></div>
<div class="abs" style="left:43px;top:392px;width:10px;height:11px;background:#fff;border:1px solid #222"></div><svg class="abs" style="left:43px;top:392px" width="10" height="11" viewBox="0 0 10 11"><path d="M0 11 L10 0" stroke="#d2202a" stroke-width="1.5"/></svg>
<div class="abs" style="left:10px;top:411px;width:15px;height:11px;background:#3a3a3a"></div><div class="abs" style="left:25px;top:411px;width:30px;height:11px;background:#626262"></div>
<div class="abs" style="left:14px;top:412px;width:7px;height:7px;border-radius:50%;border:1px solid #d0d0d0;background:#888"></div><div class="abs" style="left:17px;top:416px;width:5px;height:5px;background:#e0e0e0"></div>
<div class="abs" style="left:30px;top:412px;width:7px;height:7px;border-radius:50%;border:1px solid #d0d0d0;background:#888"></div><div class="abs" style="left:33px;top:416px;width:5px;height:5px;background:#e0e0e0"></div>
<div class="abs" style="left:44px;top:412px;width:7px;height:7px;border-radius:50%;border:1px solid #d0d0d0;background:#888"></div><div class="abs" style="left:47px;top:416px;width:5px;height:5px;background:#e0e0e0"></div>
<div class="abs" style="left:27px;top:431px;width:13px;height:9px;border:1px solid #cfcfcf;background:#6a6a6a"></div><div class="abs" style="left:22px;top:435px;width:13px;height:9px;border:1px solid #cfcfcf;background:#5a5a5a"></div>
</div>
</div>

<!-- RIGHT PANELS -->
<div id="right" class="abs">
<div class="abs" style="left:-803px;top:-46px;width:1010px;height:532px">
<div class="abs" style="left:802px;top:46px;width:14px;height:486px;background:#343434"></div>
<div class="abs" style="left:802px;top:46px;width:14px;height:16px;background:#383838"></div>
<div class="abs" style="left:800px;top:46px;font-size:11px;line-height:16px;color:#cfcfcf;letter-spacing:-1.5px">&gt;&gt;</div>
<div class="tri-u" style="left:804px;top:66px;border-left-width:4px;border-right-width:4px;border-bottom-width:5px"></div>
<div class="abs" style="left:803px;top:274px;width:12px;height:13px;background:#9c9c9c"></div>
<div class="abs" style="left:803px;top:498px;width:2px;height:14px;background:#bdbdbd"></div>
<div class="abs" style="left:802px;top:514px;width:14px;height:18px;background:#3c3c3c"></div>
<div class="abs" style="left:816px;top:46px;width:188px;height:10px;background:#2f2f2f"></div><div class="abs" style="left:1004px;top:46px;width:6px;height:10px;background:#4a4a4a"></div>
<div class="abs" style="left:992px;top:44px;font-size:8px;line-height:12px;color:#bbb;letter-spacing:-1px;font-weight:bold">&#9656;&#9656;</div>
<div class="abs" style="left:1002px;top:56px;width:8px;height:476px;background:#4a4a4a"></div>
<div class="abs" style="left:817px;top:56px;width:187px;height:14px;background:#3b3b3b"></div>
<div class="abs" style="left:817px;top:56px;width:35px;height:14px;background:#4d4d4d"></div>
<svg class="abs" style="left:819px;top:58px" width="6" height="10" viewBox="0 0 6 10"><path d="M0.5 4 L3 1 L5.5 4 M0.5 6 L3 9 L5.5 6" fill="none" stroke="#ddd" stroke-width="1.1"/></svg>
<div class="abs pt" style="left:827px;top:56px;color:#f0f0f0">颜色</div>
<div class="abs pt" style="left:857px;top:56px">颜色参考</div>
<div class="abs pt" style="left:906px;top:56px">描边</div>
<div class="abs pt" style="left:936px;top:56px">渐变</div>
<div class="tri-d" style="left:990px;top:62px;border-left-width:2px;border-right-width:2px;border-top-width:3px;border-top-color:#ccc"></div><div class="abs" style="left:995px;top:60px;width:6px;height:7px;background:repeating-linear-gradient(#c8c8c8 0 1px,transparent 1px 3px)"></div>
<div class="abs" style="left:817px;top:70px;width:185px;height:171px;background:#4b4b4b"></div>
<div class="abs" style="left:826px;top:79px;width:5px;height:5px;background:#fff;border:1px solid #111"></div><div class="abs" style="left:823px;top:76px;width:5px;height:5px;background:#eee;border:1px solid #111"></div>
<svg class="abs" style="left:836px;top:75px" width="10" height="9" viewBox="0 0 10 9"><path d="M1 4 C1 1 4 1 5 2 M9 5 C9 8 6 8 5 7" fill="none" stroke="#9aa" stroke-width="1.3"/><path d="M0 2 L3 4 L0 5Z M10 7 L7 5 L10 4Z" fill="#c9a86a"/></svg>
<div class="abs" style="left:830px;top:97px;width:15px;height:15px;background:#fff"></div>
<div class="abs" style="left:834px;top:101px;width:7px;height:7px;background:#3a3a3a"></div>
<svg class="abs" style="left:832px;top:98px" width="15" height="15" viewBox="0 0 15 15"><path d="M0 15 L15 0" stroke="#d2202a" stroke-width="1.6"/></svg>
<div class="abs" style="left:822px;top:89px;width:15px;height:15px;background:#fabd7c;border:1px solid #f0e0c8"></div>
<svg class="abs" style="left:824px;top:123px" width="11" height="12" viewBox="0 0 11 12"><path d="M5.5 0.5 L10.5 3 V9 L5.5 11.5 L0.5 9 V3 Z" fill="#8e8e8e" stroke="#cfcfcf" stroke-width=".8"/><path d="M0.5 3 L5.5 5.5 L10.5 3 M5.5 5.5 V11.5" stroke="#cfcfcf" stroke-width=".8" fill="none"/></svg>
<div class="abs" style="left:841px;top:123px;width:11px;height:11px;background:#f6c16f"></div>
<div class="abs" style="left:857px;top:77px;font-family:'Liberation Serif',serif;font-size:10px;line-height:14px;color:#e0e0e0;font-weight:bold;transform:scaleX(.8)">C</div>
<div class="abs" style="left:872px;top:82px;width:80px;height:3px;background:linear-gradient(90deg,#f7bd82,#1f8a80)"></div>
<svg class="abs" style="left:870px;top:85px" width="8" height="7" viewBox="0 0 8 7"><path d="M4 0.5 L7.3 4 V6.5 H0.7 V4 Z" fill="#c9c9c9" stroke="#333" stroke-width=".8"/></svg>
<div class="abs" style="left:958px;top:77px;width:25px;height:14px;background:#aeaeae;border:1px solid #8b8b8b"></div>
<div class="abs" style="left:958px;top:78px;width:25px;text-align:center;font-family:'Liberation Mono',monospace;font-size:9px;line-height:13px;color:#4a4a4a;letter-spacing:-0.5px">2.09</div>
<div class="abs" style="left:985px;top:78px;font-family:'Liberation Mono',monospace;font-size:8.5px;line-height:12px;color:#ddd">%</div>
<div class="abs" style="left:857px;top:97px;font-family:'Liberation Serif',serif;font-size:10px;line-height:14px;color:#e0e0e0;font-weight:bold;transform:scaleX(.8)">M</div>
<div class="abs" style="left:872px;top:102px;width:80px;height:3px;background:linear-gradient(90deg,#f6e94d,#e0164f)"></div>
<svg class="abs" style="left:889px;top:105px" width="8" height="7" viewBox="0 0 8 7"><path d="M4 0.5 L7.3 4 V6.5 H0.7 V4 Z" fill="#c9c9c9" stroke="#333" stroke-width=".8"/></svg>
<div class="abs" style="left:958px;top:97px;width:25px;height:14px;background:#aeaeae;border:1px solid #8b8b8b"></div>
<div class="abs" style="left:958px;top:98px;width:25px;text-align:center;font-family:'Liberation Mono',monospace;font-size:9px;line-height:13px;color:#4a4a4a;letter-spacing:-0.5px">26.61</div>
<div class="abs" style="left:985px;top:98px;font-family:'Liberation Mono',monospace;font-size:8.5px;line-height:12px;color:#ddd">%</div>
<div class="abs" style="left:857px;top:117px;font-family:'Liberation Serif',serif;font-size:10px;line-height:14px;color:#e0e0e0;font-weight:bold;transform:scaleX(.8)">Y</div>
<div class="abs" style="left:872px;top:122px;width:80px;height:3px;background:linear-gradient(90deg,#f6a8c0,#f2b100)"></div>
<svg class="abs" style="left:904px;top:125px" width="8" height="7" viewBox="0 0 8 7"><path d="M4 0.5 L7.3 4 V6.5 H0.7 V4 Z" fill="#c9c9c9" stroke="#333" stroke-width=".8"/></svg>
<div class="abs" style="left:958px;top:117px;width:25px;height:14px;background:#aeaeae;border:1px solid #8b8b8b"></div>
<div class="abs" style="left:958px;top:118px;width:25px;text-align:center;font-family:'Liberation Mono',monospace;font-size:9px;line-height:13px;color:#4a4a4a;letter-spacing:-0.5px">44.21</div>
<div class="abs" style="left:985px;top:118px;font-family:'Liberation Mono',monospace;font-size:8.5px;line-height:12px;color:#ddd">%</div>
<div class="abs" style="left:857px;top:136px;font-family:'Liberation Serif',serif;font-size:10px;line-height:14px;color:#e0e0e0;font-weight:bold;transform:scaleX(.8)">K</div>
<div class="abs" style="left:872px;top:141px;width:80px;height:3px;background:linear-gradient(90deg,#f7bd7e,#0a0603)"></div>
<svg class="abs" style="left:869px;top:144px" width="8" height="7" viewBox="0 0 8 7"><path d="M4 0.5 L7.3 4 V6.5 H0.7 V4 Z" fill="#c9c9c9" stroke="#333" stroke-width=".8"/></svg>
<div class="abs" style="left:958px;top:136px;width:25px;height:14px;background:#aeaeae;border:1px solid #8b8b8b"></div>
<div class="abs" style="left:958px;top:137px;width:25px;text-align:center;font-family:'Liberation Mono',monospace;font-size:9px;line-height:13px;color:#4a4a4a;letter-spacing:-0.5px">0.18</div>
<div class="abs" style="left:985px;top:137px;font-family:'Liberation Mono',monospace;font-size:8.5px;line-height:12px;color:#ddd">%</div>
<div class="abs" style="left:822px;top:160px;width:10px;height:10px;background:#fff"></div><svg class="abs" style="left:822px;top:160px" width="10" height="10" viewBox="0 0 10 10"><path d="M0 10 L10 0" stroke="#d2202a" stroke-width="1.4"/></svg>
<div class="abs" style="left:832px;top:160px;width:10px;height:10px;background:#000"></div>
<div class="abs" style="left:842px;top:160px;width:10px;height:10px;background:#fff"></div>
<div class="abs" style="left:822px;top:178px;width:169px;height:57px;background:linear-gradient(to bottom,rgba(255,255,255,1) 0%,rgba(255,255,255,.55) 20%,rgba(255,255,255,0) 46%,rgba(0,0,0,0) 56%,rgba(0,0,0,.55) 80%,rgba(0,0,0,1) 100%),linear-gradient(90deg,#ff0000 0%,#ff7a00 9%,#ffee00 17%,#48c800 28%,#00a24a 38%,#00a6c8 50%,#0050c8 58%,#2a12a8 66%,#a000a0 76%,#f0006e 88%,#ff0020 100%)"></div>
<div class="abs" style="left:817px;top:241px;width:185px;height:2px;background:#333"></div>
<div class="abs" style="left:817px;top:243px;width:187px;height:14px;background:#3b3b3b"></div>
<div class="abs" style="left:878px;top:243px;width:29px;height:14px;background:#4d4d4d"></div>
<div class="abs pt" style="left:822px;top:243px">色板</div>
<div class="abs pt" style="left:853px;top:243px">画笔</div>
<div class="abs pt" style="left:883px;top:243px;color:#f0f0f0">图层</div>
<div class="abs pt" style="left:914px;top:243px">路径查找器</div>
<div class="tri-d" style="left:990px;top:249px;border-left-width:2px;border-right-width:2px;border-top-width:3px;border-top-color:#ccc"></div><div class="abs" style="left:995px;top:247px;width:6px;height:7px;background:repeating-linear-gradient(#c8c8c8 0 1px,transparent 1px 3px)"></div>
<div class="abs" style="left:817px;top:257px;width:185px;height:154px;background:#4b4b4b"></div>
<div class="abs" style="left:820px;top:262px;width:171px;height:17px;background:#535353;border-top:1px solid #3c3c3c"></div>
<div class="abs" style="left:855px;top:263px;width:3px;height:16px;background:#4f7fe0"></div>
<svg class="abs" style="left:823px;top:266px" width="12" height="9" viewBox="0 0 12 9"><path d="M0.5 4.5 C3 0.5 9 0.5 11.5 4.5 C9 8.5 3 8.5 0.5 4.5 Z" fill="#dedede"/><circle cx="6" cy="4.5" r="2.2" fill="#444"/><circle cx="6" cy="4.5" r="1" fill="#ddd"/></svg>
<div class="tri-r" style="left:910px;top:267px;border-left-width:5px;border-top-width:3.5px;border-bottom-width:3.5px"></div>
<div class="abs" style="left:924px;top:264px;width:12px;height:14px;background:#fbfbfb;overflow:hidden;box-shadow:0 0 0 1px #222">
<div class="abs" style="left:3px;top:2px;width:6px;height:9px;border-radius:50%;background:#1a2a5a;border:1px solid #111"></div><div class="abs" style="left:5px;top:3px;width:2px;height:3px;border-radius:50%;background:#fff"></div>
</div>
<div class="abs" style="left:966px;top:266px;width:9px;height:9px;border-radius:50%;border:1.3px solid #cfcfcf;background:#3c3c3c"></div><div class="abs" style="left:969.5px;top:269.5px;width:2px;height:2px;border-radius:50%;background:#c8c8c8"></div>
<div class="abs" style="left:820px;top:279px;width:171px;height:16px;background:#535353;border-top:1px solid #3c3c3c"></div>
<div class="abs" style="left:855px;top:280px;width:3px;height:15px;background:#4f7fe0"></div>
<svg class="abs" style="left:823px;top:283px" width="12" height="9" viewBox="0 0 12 9"><path d="M0.5 4.5 C3 0.5 9 0.5 11.5 4.5 C9 8.5 3 8.5 0.5 4.5 Z" fill="#dedede"/><circle cx="6" cy="4.5" r="2.2" fill="#444"/><circle cx="6" cy="4.5" r="1" fill="#ddd"/></svg>
<div class="abs" style="left:924px;top:281px;width:12px;height:13px;background:#fbfbfb;overflow:hidden;box-shadow:0 0 0 1px #222">
<div class="abs" style="left:2px;top:6px;width:9px;height:3px;border-radius:50%;background:#f2c4c4"></div>
</div>
<div class="abs" style="left:966px;top:283px;width:9px;height:9px;border-radius:50%;border:1.3px solid #cfcfcf;background:#3c3c3c"></div><div class="abs" style="left:969.5px;top:286.5px;width:2px;height:2px;border-radius:50%;background:#c8c8c8"></div>
<div class="abs" style="left:820px;top:295px;width:171px;height:17px;background:#535353;border-top:1px solid #3c3c3c"></div>
<div class="abs" style="left:855px;top:296px;width:3px;height:16px;background:#4f7fe0"></div>
<svg class="abs" style="left:823px;top:299px" width="12" height="9" viewBox="0 0 12 9"><path d="M0.5 4.5 C3 0.5 9 0.5 11.5 4.5 C9 8.5 3 8.5 0.5 4.5 Z" fill="#dedede"/><circle cx="6" cy="4.5" r="2.2" fill="#444"/><circle cx="6" cy="4.5" r="1" fill="#ddd"/></svg>
<div class="abs" style="left:924px;top:297px;width:12px;height:14px;background:#fbfbfb;overflow:hidden;box-shadow:0 0 0 1px #222">
<div class="abs" style="left:2px;top:6px;width:9px;height:3px;border-radius:50%;background:#f2c4c4"></div>
</div>
<div class="abs" style="left:966px;top:299px;width:9px;height:9px;border-radius:50%;border:1.3px solid #cfcfcf;background:#3c3c3c"></div><div class="abs" style="left:969.5px;top:302.5px;width:2px;height:2px;border-radius:50%;background:#c8c8c8"></div>
<div class="abs" style="left:820px;top:312px;width:171px;height:16px;background:#535353;border-top:1px solid #3c3c3c"></div>
<div class="abs" style="left:855px;top:313px;width:3px;height:15px;background:#4f7fe0"></div>
<div class="tri-r" style="left:910px;top:317px;border-left-width:5px;border-top-width:3.5px;border-bottom-width:3.5px"></div>
<div class="abs" style="left:924px;top:314px;width:12px;height:13px;background:#fbfbfb;overflow:hidden;box-shadow:0 0 0 1px #222">
<div class="abs" style="left:0;top:2px;width:11px;height:10px;border-radius:50% 50% 40% 40%;background:#8a3a1a"></div><div class="abs" style="left:7px;top:6px;width:5px;height:5px;border-radius:50%;background:#f5a033"></div>
</div>
<div class="abs" style="left:966px;top:316px;width:9px;height:9px;border-radius:50%;border:1.3px solid #cfcfcf;background:#3c3c3c"></div><div class="abs" style="left:969.5px;top:319.5px;width:2px;height:2px;border-radius:50%;background:#c8c8c8"></div>
<div class="abs" style="left:820px;top:328px;width:171px;height:17px;background:#535353;border-top:1px solid #3c3c3c"></div>
<div class="abs" style="left:855px;top:329px;width:3px;height:16px;background:#4f7fe0"></div>
<div class="tri-r" style="left:910px;top:333px;border-left-width:5px;border-top-width:3.5px;border-bottom-width:3.5px"></div>
<div class="abs" style="left:924px;top:330px;width:12px;height:14px;background:#fbfbfb;overflow:hidden;box-shadow:0 0 0 1px #222">
<div class="abs" style="left:3px;top:2px;width:10px;height:12px;border-radius:50%;border-left:1px solid #c9a27a"></div>
</div>
<div class="abs" style="left:966px;top:332px;width:9px;height:9px;border-radius:50%;border:1.3px solid #cfcfcf;background:#3c3c3c"></div><div class="abs" style="left:969.5px;top:335.5px;width:2px;height:2px;border-radius:50%;background:#c8c8c8"></div>
<div class="abs" style="left:820px;top:345px;width:171px;height:17px;background:#535353;border-top:1px solid #3c3c3c"></div>
<div class="abs" style="left:855px;top:346px;width:3px;height:16px;background:#4f7fe0"></div>
<div class="tri-r" style="left:910px;top:350px;border-left-width:5px;border-top-width:3.5px;border-bottom-width:3.5px"></div>
<div class="abs" style="left:924px;top:347px;width:12px;height:14px;background:#fbfbfb;overflow:hidden;box-shadow:0 0 0 1px #222">
<div class="abs" style="left:3px;top:2px;width:10px;height:12px;border-radius:50%;border-left:1px solid #c9a27a"></div>
</div>
<div class="abs" style="left:966px;top:349px;width:9px;height:9px;border-radius:50%;border:1.3px solid #cfcfcf;background:#3c3c3c"></div><div class="abs" style="left:969.5px;top:352.5px;width:2px;height:2px;border-radius:50%;background:#c8c8c8"></div>
<div class="abs" style="left:820px;top:362px;width:171px;height:16px;background:#535353;border-top:1px solid #3c3c3c"></div>
<div class="abs" style="left:855px;top:363px;width:3px;height:15px;background:#4f7fe0"></div>
<div class="tri-r" style="left:910px;top:367px;border-left-width:5px;border-top-width:3.5px;border-bottom-width:3.5px"></div>
<div class="abs" style="left:924px;top:364px;width:12px;height:13px;background:#fbfbfb;overflow:hidden;box-shadow:0 0 0 1px #222">
<div class="abs" style="left:1px;top:3px;width:10px;height:8px;border-radius:50%;background:#f3c48a"></div>
</div>
<div class="abs" style="left:966px;top:366px;width:9px;height:9px;border-radius:50%;border:1.3px solid #cfcfcf;background:#3c3c3c"></div><div class="abs" style="left:969.5px;top:369.5px;width:2px;height:2px;border-radius:50%;background:#c8c8c8"></div>
<div class="abs" style="left:820px;top:378px;width:171px;height:17px;background:#535353;border-top:1px solid #3c3c3c"></div>
<div class="abs" style="left:855px;top:379px;width:3px;height:16px;background:#4f7fe0"></div>
<div class="tri-r" style="left:910px;top:383px;border-left-width:5px;border-top-width:3.5px;border-bottom-width:3.5px"></div>
<div class="abs" style="left:924px;top:380px;width:12px;height:14px;background:#fbfbfb;overflow:hidden;box-shadow:0 0 0 1px #222">
<div class="abs" style="left:1px;top:8px;width:10px;height:1px;background:#c9a27a"></div>
</div>
<div class="abs" style="left:966px;top:382px;width:9px;height:9px;border-radius:50%;border:1.3px solid #cfcfcf;background:#3c3c3c"></div><div class="abs" style="left:969.5px;top:385.5px;width:2px;height:2px;border-radius:50%;background:#c8c8c8"></div>
<div class="abs" style="left:820px;top:395px;width:171px;height:16px;background:#535353;border-top:1px solid #3c3c3c"></div>
<div class="abs" style="left:855px;top:396px;width:3px;height:15px;background:#4f7fe0"></div>
<div class="tri-r" style="left:910px;top:400px;border-left-width:5px;border-top-width:3.5px;border-bottom-width:3.5px"></div>
<div class="abs" style="left:924px;top:397px;width:12px;height:13px;background:#fbfbfb;overflow:hidden;box-shadow:0 0 0 1px #222">
<div class="abs" style="left:-1px;top:7px;width:14px;height:1px;background:#b99a5a;transform:rotate(-45deg)"></div>
</div>
<div class="abs" style="left:966px;top:399px;width:9px;height:9px;border-radius:50%;border:1.3px solid #cfcfcf;background:#3c3c3c"></div><div class="abs" style="left:969.5px;top:402.5px;width:2px;height:2px;border-radius:50%;background:#c8c8c8"></div>
<div class="abs" style="left:837px;top:262px;width:1px;height:149px;background:#3c3c3c"></div>
<div class="abs" style="left:853px;top:262px;width:1px;height:149px;background:#3c3c3c"></div>
<div class="abs" style="left:962px;top:262px;width:1px;height:149px;background:#3c3c3c"></div>
<div class="abs" style="left:820px;top:411px;width:171px;height:1px;background:#3c3c3c"></div>
<div class="abs" style="left:991px;top:262px;width:11px;height:149px;background:#3a3a3a"></div>
<div class="tri-u" style="left:993px;top:266px;border-bottom-color:#e8e8e8"></div>
<div class="abs" style="left:992px;top:281px;width:9px;height:10px;background:#9c9c9c"></div>
<div class="tri-d" style="left:993px;top:405px;border-top-color:#e8e8e8"></div>
<div class="abs" style="left:810px;top:411px;width:200px;height:121px;background:#494949"></div>
<div class="abs" style="left:810px;top:456px;width:6px;height:76px;background:#3a3a3a"></div>
<div class="abs" style="left:832px;top:440px;width:120px;height:62px;opacity:.5;background:repeating-linear-gradient(90deg,#454545 0 5px,#4b4b4b 5px 9px,#474747 9px 13px)"></div>
</div>
</div>

<!-- STATUS BAR -->
<div id="status" class="abs">
  <div class="abs" style="left:0;top:13px;width:756px;height:5px;background:#4b4b4b"></div>
  <div class="abs" style="left:377px;top:1px;width:366px;height:12px;background:#343434"></div>
  <div class="abs" style="left:8px;top:3px;width:15px;height:8px;border:1px solid #5c5c5c;border-radius:2px;color:#5e5e5e;font-size:7px;line-height:6px;text-align:center">o%</div>
  <svg class="abs" style="left:31px;top:2px" width="12" height="10" viewBox="0 0 12 10"><path d="M1 3 V9 H9 V6" fill="none" stroke="#d6d6d6" stroke-width="1.4"/><path d="M4 6 C4 3 6 2 8 2 V0 L12 3 L8 6 V4 C6 4 5 5 4 6 Z" fill="#d6d6d6"/></svg>
  <div class="abs" style="left:51px;top:2px;width:33px;height:11px;background:#b2b2b2"></div>
  <div class="abs" style="left:52px;top:1px;font-family:'Liberation Mono',monospace;font-size:9px;line-height:12px;color:#222;letter-spacing:-0.4px">364.65</div>
  <div class="dd" style="left:84px;top:2px;width:11px;height:11px"></div><div class="tri-d" style="left:86px;top:6px"></div>
  <div class="abs" style="left:102px;top:4px;width:1.5px;height:7px;background:#666"></div><div class="tri-l" style="left:104px;top:4px;border-right-color:#666"></div>
  <div class="tri-l" style="left:118px;top:4px;border-right-color:#666"></div>
  <div class="abs" style="left:129px;top:2px;width:32px;height:11px;background:#a4a4a4"></div>
  <div class="abs" style="left:131px;top:1px;font-family:'Liberation Mono',monospace;font-size:9px;line-height:12px;color:#222">1</div>
  <div class="dd" style="left:161px;top:2px;width:11px;height:11px"></div><div class="tri-d" style="left:163px;top:6px"></div>
  <div class="tri-r" style="left:181px;top:4px;border-left-color:#666"></div>
  <div class="tri-r" style="left:193px;top:4px;border-left-color:#666"></div><div class="abs" style="left:198px;top:4px;width:1.5px;height:7px;background:#666"></div>
  <div class="abs" style="left:266px;top:1px;font-family:'Liberation Serif','Noto Serif CJK SC',serif;font-size:9.5px;line-height:12px;color:#e4e4e4;white-space:nowrap">直接选择</div>
  <div class="tri-r" style="left:368px;top:4px"></div>
  <div class="tri-l" style="left:382px;top:3px;border-right-width:5px;border-top-width:4px;border-bottom-width:4px"></div>
  <div class="abs" style="left:553px;top:2px;width:12px;height:11px;background:#a6a6a6"></div>
  <div class="tri-r" style="left:734px;top:3px;border-left-width:5px;border-top-width:4px;border-bottom-width:4px"></div>
</div>

</div>
</body>
</html>
